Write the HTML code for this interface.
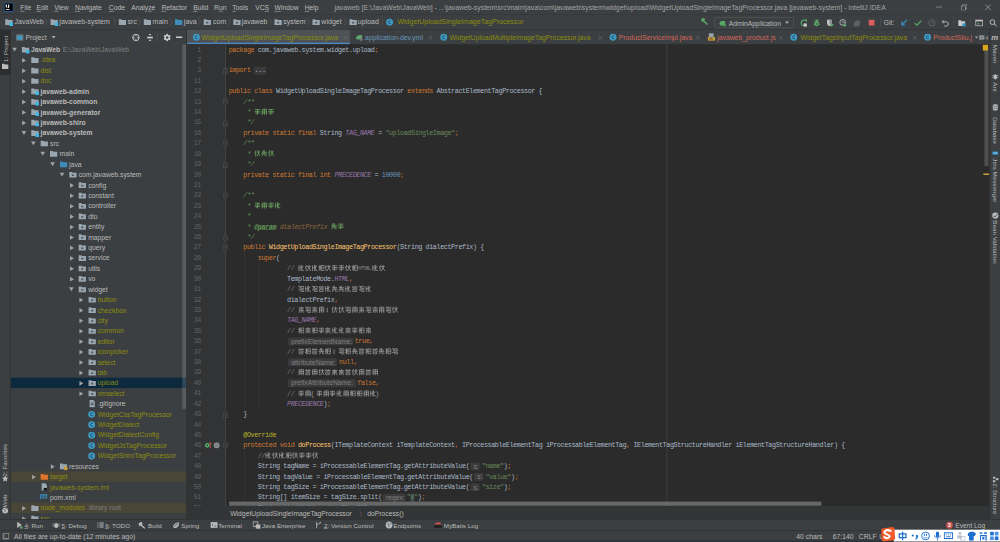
<!DOCTYPE html><html><head><meta charset="utf-8"><style>
*{margin:0;padding:0;box-sizing:border-box}
html,body{width:1000px;height:542px;overflow:hidden;background:#3c3f41}
#root{position:absolute;left:0;top:0;width:1920px;height:1040px;transform:scale(0.5208333);transform-origin:0 0;background:#3c3f41;font-family:"Liberation Sans",sans-serif;font-size:13px;color:#bbbbbb;overflow:hidden}
.abs{position:absolute}
.t{position:absolute;white-space:pre;line-height:20px}
.mono{font-family:"Liberation Mono",monospace}
#title{left:0;top:0;width:1920px;height:27px;background:#3c3f41}
#tline{left:0;top:27px;width:1920px;height:1px;background:#2b2b2b}
#nav{left:0;top:28px;width:1920px;height:28px;background:#3c3f41}
#nline{left:0;top:56px;width:1920px;height:1px;background:#2b2b2b}
#lstrip{left:0;top:57px;width:20px;height:940px;background:#3c3f41;border-right:1px solid #2b2b2b}
#proj{left:21px;top:57px;width:337px;height:940px;background:#3c3f41}
#projhdr{left:0;top:0;width:337px;height:28px;background:#3c3f41}
#tree{left:0;top:28px;width:337px;height:912px;overflow:hidden}
.row{position:absolute;left:0;width:337px;height:20px}
#psplit{left:358px;top:57px;width:1px;height:940px;background:#2b2b2b}
#tabs{left:359px;top:57px;width:1541px;height:28px;background:#3c3f41}
#editor{left:359px;top:85px;width:1541px;height:887px;background:#2b2b2b;overflow:hidden}
#gutter{left:0;top:0;width:75px;height:887px;background:#313335}
#crumb{left:359px;top:972px;width:1541px;height:25px;background:#323435}
#rstrip{left:1900px;top:57px;width:20px;height:940px;background:#3c3f41;border-left:1px solid #2b2b2b}
#toolbar{left:0;top:997px;width:1920px;height:21px;background:#3c3f41;border-top:1px solid #2b2b2b}
#status{left:0;top:1018px;width:1920px;height:22px;background:#3c3f41;border-top:1px solid #2b2b2b}
.cl{position:absolute;left:80px;height:20px;line-height:20px;margin-top:0.5px;white-space:pre;font-family:"Liberation Mono",monospace;font-size:13px;letter-spacing:-0.8px;color:#a9b7c6}
.ln{position:absolute;left:0;width:26px;text-align:right;height:20px;line-height:20px;margin-top:0.5px;font-family:"Liberation Mono",monospace;font-size:13px;letter-spacing:-1.3px;color:#606366}
.kw{color:#cc7832}.str{color:#6a8759}.num{color:#6897bb}.doc{color:#629755;font-style:italic}.cm{color:#808080}
.cst{color:#9876aa;font-style:italic}.fn{color:#ffc66d}.ann{color:#bbb529}
.hint{display:inline-block;height:15px;line-height:15px;background:#3b3b3b;color:#808080;font-family:"Liberation Sans",sans-serif;font-size:13px;letter-spacing:0;padding:0 0 0 6px;border-radius:3px;vertical-align:top;margin-top:2px;margin-right:3px;overflow:hidden;white-space:pre}
.cj{display:inline-block;width:12.86px;height:12.5px;vertical-align:-2px;padding:0 0.5px 0 0.4px;opacity:.95}
</style></head><body><div id="root"><div id="title" class="abs"><svg class="abs" style="left:7px;top:5px" width="19" height="18" viewBox="0 0 19 18"><rect x="0.75" y="0.75" width="17.5" height="16.5" fill="#000" stroke="#2f6fc0" stroke-width="1.5"/><path d="M4 3.5h2.2v6H4zM8.5 3.5h2.2v5c0 1.5-1 2-2.5 2H7.5V9h.7c.3 0 .3-.2.3-.5z" fill="#fff"/><rect x="4" y="12.5" width="7" height="1.6" fill="#fff"/></svg><div class="t" style="left:39px;top:6px;color:#bbbbbb;font-size:13px;"><span style="text-decoration:underline;text-underline-offset:1px">F</span>ile</div><div class="t" style="left:70px;top:6px;color:#bbbbbb;font-size:13px;"><span style="text-decoration:underline;text-underline-offset:1px">E</span>dit</div><div class="t" style="left:104px;top:6px;color:#bbbbbb;font-size:13px;"><span style="text-decoration:underline;text-underline-offset:1px">V</span>iew</div><div class="t" style="left:144px;top:6px;color:#bbbbbb;font-size:13px;"><span style="text-decoration:underline;text-underline-offset:1px">N</span>avigate</div><div class="t" style="left:209px;top:6px;color:#bbbbbb;font-size:13px;"><span style="text-decoration:underline;text-underline-offset:1px">C</span>ode</div><div class="t" style="left:252px;top:6px;color:#bbbbbb;font-size:13px;">Analy<span style="text-decoration:underline;text-underline-offset:1px">z</span>e</div><div class="t" style="left:310px;top:6px;color:#bbbbbb;font-size:13px;"><span style="text-decoration:underline;text-underline-offset:1px">R</span>efactor</div><div class="t" style="left:371px;top:6px;color:#bbbbbb;font-size:13px;"><span style="text-decoration:underline;text-underline-offset:1px">B</span>uild</div><div class="t" style="left:411px;top:6px;color:#bbbbbb;font-size:13px;">R<span style="text-decoration:underline;text-underline-offset:1px">u</span>n</div><div class="t" style="left:446px;top:6px;color:#bbbbbb;font-size:13px;"><span style="text-decoration:underline;text-underline-offset:1px">T</span>ools</div><div class="t" style="left:490px;top:6px;color:#bbbbbb;font-size:13px;">VC<span style="text-decoration:underline;text-underline-offset:1px">S</span></div><div class="t" style="left:527px;top:6px;color:#bbbbbb;font-size:13px;"><span style="text-decoration:underline;text-underline-offset:1px">W</span>indow</div><div class="t" style="left:585px;top:6px;color:#bbbbbb;font-size:13px;"><span style="text-decoration:underline;text-underline-offset:1px">H</span>elp</div><div class="t" style="left:642px;top:5.5px;color:#a5a5a5;font-size:13.2px;">javaweb [E:\JavaWeb\JavaWeb] - ...\javaweb-system\src\main\java\com\javaweb\system\widget\upload\WidgetUploadSingleImageTagProcessor.java [javaweb-system] - IntelliJ IDEA</div><div class="abs" style="left:1797px;top:13px;width:12px;height:1px;background:#bbb"></div><svg class="abs" style="left:1845px;top:8px" width="12" height="12" viewBox="0 0 12 12"><rect x="0.5" y="3.5" width="8" height="8" fill="none" stroke="#bbb"/><path d="M3.5 3.5V0.5H11.5V8.5H8.5" fill="none" stroke="#bbb"/></svg><svg class="abs" style="left:1891px;top:8px" width="12" height="12" viewBox="0 0 12 12"><path d="M0.5 0.5L11.5 11.5M11.5 0.5L0.5 11.5" stroke="#bbb" stroke-width="1.2"/></svg></div><div id="tline" class="abs"></div><div id="nav" class="abs"><svg class="abs" style="left:9px;top:6px" width="16" height="16" viewBox="0 0 16 16"><path d="M1 3h5l1.5 1.5H15V14H1z" fill="#9aa7b0"/><rect x="9" y="9" width="7" height="7" fill="#40b6e0"/></svg><div class="t" style="left:28px;top:5px;color:#bbbbbb;font-size:13.5px;">JavaWeb</div><svg class="abs" style="left:85px;top:5px" width="8" height="18" viewBox="0 0 8 18"><path d="M1 1L6 9L1 17" fill="none" stroke="#5a5d5f"/></svg><svg class="abs" style="left:96px;top:6px" width="16" height="16" viewBox="0 0 16 16"><path d="M1 3h5l1.5 1.5H15V14H1z" fill="#9aa7b0"/><rect x="9" y="9" width="7" height="7" fill="#40b6e0"/></svg><div class="t" style="left:114px;top:5px;color:#bbbbbb;font-size:13.5px;">javaweb-system</div><svg class="abs" style="left:216px;top:5px" width="8" height="18" viewBox="0 0 8 18"><path d="M1 1L6 9L1 17" fill="none" stroke="#5a5d5f"/></svg><svg class="abs" style="left:227px;top:6px" width="16" height="16" viewBox="0 0 16 16"><path d="M1 3h5l1.5 1.5H15V14H1z" fill="#9aa7b0"/></svg><div class="t" style="left:245px;top:5px;color:#bbbbbb;font-size:13.5px;">src</div><svg class="abs" style="left:264px;top:5px" width="8" height="18" viewBox="0 0 8 18"><path d="M1 1L6 9L1 17" fill="none" stroke="#5a5d5f"/></svg><svg class="abs" style="left:275px;top:6px" width="16" height="16" viewBox="0 0 16 16"><path d="M1 3h5l1.5 1.5H15V14H1z" fill="#9aa7b0"/></svg><div class="t" style="left:293px;top:5px;color:#bbbbbb;font-size:13.5px;">main</div><svg class="abs" style="left:324px;top:5px" width="8" height="18" viewBox="0 0 8 18"><path d="M1 1L6 9L1 17" fill="none" stroke="#5a5d5f"/></svg><svg class="abs" style="left:335px;top:6px" width="16" height="16" viewBox="0 0 16 16"><path d="M1 3h5l1.5 1.5H15V14H1z" fill="#3d8dbb"/></svg><div class="t" style="left:353px;top:5px;color:#bbbbbb;font-size:13.5px;">java</div><svg class="abs" style="left:379px;top:5px" width="8" height="18" viewBox="0 0 8 18"><path d="M1 1L6 9L1 17" fill="none" stroke="#5a5d5f"/></svg><svg class="abs" style="left:390px;top:6px" width="16" height="16" viewBox="0 0 16 16"><path d="M1 3h5l1.5 1.5H15V14H1z" fill="#9aa7b0"/><rect x="6" y="8" width="4" height="3" fill="#3c3f41" opacity=".8"/></svg><div class="t" style="left:409px;top:5px;color:#bbbbbb;font-size:13.5px;">com</div><svg class="abs" style="left:436px;top:5px" width="8" height="18" viewBox="0 0 8 18"><path d="M1 1L6 9L1 17" fill="none" stroke="#5a5d5f"/></svg><svg class="abs" style="left:447px;top:6px" width="16" height="16" viewBox="0 0 16 16"><path d="M1 3h5l1.5 1.5H15V14H1z" fill="#9aa7b0"/><rect x="6" y="8" width="4" height="3" fill="#3c3f41" opacity=".8"/></svg><div class="t" style="left:464px;top:5px;color:#bbbbbb;font-size:13.5px;">javaweb</div><svg class="abs" style="left:515px;top:5px" width="8" height="18" viewBox="0 0 8 18"><path d="M1 1L6 9L1 17" fill="none" stroke="#5a5d5f"/></svg><svg class="abs" style="left:526px;top:6px" width="16" height="16" viewBox="0 0 16 16"><path d="M1 3h5l1.5 1.5H15V14H1z" fill="#9aa7b0"/><rect x="6" y="8" width="4" height="3" fill="#3c3f41" opacity=".8"/></svg><div class="t" style="left:544px;top:5px;color:#bbbbbb;font-size:13.5px;">system</div><svg class="abs" style="left:588px;top:5px" width="8" height="18" viewBox="0 0 8 18"><path d="M1 1L6 9L1 17" fill="none" stroke="#5a5d5f"/></svg><svg class="abs" style="left:599px;top:6px" width="16" height="16" viewBox="0 0 16 16"><path d="M1 3h5l1.5 1.5H15V14H1z" fill="#9aa7b0"/><rect x="6" y="8" width="4" height="3" fill="#3c3f41" opacity=".8"/></svg><div class="t" style="left:617px;top:5px;color:#bbbbbb;font-size:13.5px;">widget</div><svg class="abs" style="left:659px;top:5px" width="8" height="18" viewBox="0 0 8 18"><path d="M1 1L6 9L1 17" fill="none" stroke="#5a5d5f"/></svg><svg class="abs" style="left:670px;top:6px" width="16" height="16" viewBox="0 0 16 16"><path d="M1 3h5l1.5 1.5H15V14H1z" fill="#9aa7b0"/><rect x="6" y="8" width="4" height="3" fill="#3c3f41" opacity=".8"/></svg><div class="t" style="left:687px;top:5px;color:#bbbbbb;font-size:13.5px;">upload</div><svg class="abs" style="left:730px;top:5px" width="8" height="18" viewBox="0 0 8 18"><path d="M1 1L6 9L1 17" fill="none" stroke="#5a5d5f"/></svg><svg class="abs" style="left:740px;top:6px" width="16" height="16" viewBox="0 0 16 16"><circle cx="8" cy="8.5" r="6.6" fill="#3e9bc5"/><path d="M10.4 6.3A2.9 2.9 0 1 0 10.4 10.7" stroke="#1f4456" stroke-width="1.6" fill="none"/></svg><div class="t" style="left:763px;top:5px;color:#8c8c10;font-size:13.5px;">WidgetUploadSingleImageTagProcessor</div><svg class="abs" style="left:1344px;top:5px" width="16" height="16" viewBox="0 0 16 16"><path d="M2 4L7 1L10 4L8 6L15 13L13 15L6 8L4 10z" fill="#59a869"/></svg><div class="abs" style="left:1372px;top:5px;width:152px;height:21px;border:1px solid #5e6060;border-radius:2px;background:#3c3f41"></div><svg class="abs" style="left:1379px;top:8px" width="16" height="16" viewBox="0 0 16 16"><path d="M2 9C4 3 11 3 14 6L12 13L4 13z" fill="#59a869"/><circle cx="12" cy="12" r="3" fill="#499c54"/></svg><div class="t" style="left:1399px;top:6.5px;color:#bbbbbb;font-size:13px;">AdminApplication</div><svg class="abs" style="left:1507px;top:13px" width="8" height="6" viewBox="0 0 8 6"><path d="M0 0H8L4 5z" fill="#aaa"/></svg><svg class="abs" style="left:1535px;top:8px" width="16" height="16" viewBox="0 0 16 16"><path d="M8.5 13.5A5.5 5.5 0 1 1 12.5 4" stroke="#59a869" stroke-width="2.2" fill="none"/><path d="M9.5 1.5L14.5 1.5L14.5 6.5z" fill="#59a869"/><rect x="8" y="9" width="6" height="6" fill="#cfcfcf"/></svg><svg class="abs" style="left:1560px;top:8px" width="16" height="16" viewBox="0 0 16 16"><ellipse cx="8" cy="9.5" rx="4" ry="5" fill="#59a869"/><circle cx="8" cy="4" r="2.5" fill="#59a869"/><path d="M2 7h3M11 7h3M2 11h3M11 11h3M4 2l2 2M12 2l-2 2" stroke="#59a869" stroke-width="1.4"/><circle cx="8" cy="10" r="1.6" fill="#3c3f41"/></svg><svg class="abs" style="left:1586px;top:8px" width="16" height="16" viewBox="0 0 16 16"><path d="M2 2h9v6c0 3-2 5-4.5 6C4 13 2 11 2 8z" fill="#c9c9c9"/><path d="M6.5 2h4.5v6c0 1-.3 2-1 3H6.5z" fill="#8c8c8c"/><path d="M9 8.5l6.5 3.5-6.5 3.5z" fill="#59a869"/></svg><svg class="abs" style="left:1611px;top:8px" width="16" height="16" viewBox="0 0 16 16"><circle cx="7" cy="7" r="5.5" fill="none" stroke="#c9c9c9" stroke-width="1.6"/><path d="M7 4v3h3" stroke="#c9c9c9" stroke-width="1.4" fill="none"/><path d="M9 9l6 4-6 3z" fill="#59a869"/></svg><svg class="abs" style="left:1637px;top:8px" width="16" height="16" viewBox="0 0 16 16"><path d="M2 12C2 6 6 3 10 3s5 4 4 8-5 4-8 4-4-1-4-3z" fill="#5d5f60"/></svg><svg class="abs" style="left:1666px;top:8px" width="16" height="16" viewBox="0 0 16 16"><rect x="2" y="2" width="11" height="11" fill="#db5c5c"/></svg><svg class="abs" style="left:1728px;top:8px" width="16" height="16" viewBox="0 0 16 16"><path d="M13.5 2L4 11.5M3.5 5.5v6.5h6.5" stroke="#3592c4" stroke-width="2.2" fill="none"/></svg><svg class="abs" style="left:1755px;top:8px" width="16" height="16" viewBox="0 0 16 16"><path d="M1.5 8.5l4 4L14 3.5" stroke="#59a869" stroke-width="2.3" fill="none"/></svg><svg class="abs" style="left:1781px;top:8px" width="16" height="16" viewBox="0 0 16 16"><circle cx="8" cy="8" r="6" fill="none" stroke="#6e6e6e" stroke-width="1.4"/><path d="M8 4.5V8h3" stroke="#6e6e6e" stroke-width="1.3" fill="none"/></svg><svg class="abs" style="left:1807px;top:8px" width="16" height="16" viewBox="0 0 16 16"><path d="M5 3L2 6l3 3" stroke="#c9c9c9" stroke-width="1.6" fill="none"/><path d="M2.5 6H10a4 4 0 0 1 0 8H6" stroke="#c9c9c9" stroke-width="1.6" fill="none"/></svg><svg class="abs" style="left:1839px;top:8px" width="16" height="16" viewBox="0 0 16 16"><path d="M1 3h5l1 2h7v9H1z" fill="#c9c9c9"/><rect x="9" y="9" width="6" height="6" fill="#3592c4"/></svg><svg class="abs" style="left:1872px;top:8px" width="16" height="16" viewBox="0 0 16 16"><rect x="1.5" y="2.5" width="13" height="11" fill="none" stroke="#c9c9c9" stroke-width="1.3"/><rect x="1.5" y="2.5" width="13" height="2.5" fill="#c9c9c9"/><path d="M5 7l4 2.5L5 12z" fill="#59a869"/></svg><svg class="abs" style="left:1899px;top:8px" width="16" height="16" viewBox="0 0 16 16"><circle cx="6.5" cy="6.5" r="4.5" fill="none" stroke="#c9c9c9" stroke-width="1.7"/><path d="M10 10l4.5 4.5" stroke="#c9c9c9" stroke-width="1.9"/></svg><div class="abs" style="left:1690px;top:5px;width:1px;height:18px;background:#515151"></div><div class="abs" style="left:1830px;top:5px;width:1px;height:18px;background:#515151"></div><div class="abs" style="left:1863px;top:5px;width:1px;height:18px;background:#515151"></div><div class="t" style="left:1697px;top:6px;color:#bbbbbb;font-size:13px;">Git:</div></div><div id="nline" class="abs"></div><div id="lstrip" class="abs"><div class="abs" style="left:0;top:1px;width:20px;height:86px;background:#2b2d2e"></div><div class="abs" style="left:4.5px;top:62px;transform:rotate(-90deg);transform-origin:0 0;white-space:pre;font-size:12px;line-height:14px;color:#bbbbbb">1: Project</div><svg class="abs" style="left:3px;top:63px" width="14" height="14" viewBox="0 0 16 16"><path d="M1 3h5l1.5 1.5H15V14H1z" fill="#bbbbbb"/></svg><div class="abs" style="left:3px;top:858px;transform:rotate(-90deg);transform-origin:0 0;white-space:pre;font-size:12px;line-height:14px;color:#bbbbbb">2: Favorites</div><svg class="abs" style="left:3px;top:855px" width="14" height="14" viewBox="0 0 16 16"><path d="M8 1l2.1 4.6 5 .5-3.8 3.4 1.1 4.9L8 11.9 3.6 14.4l1.1-4.9L.9 6.1l5-.5z" fill="#bbbbbb"/></svg><div class="abs" style="left:3px;top:917px;transform:rotate(-90deg);transform-origin:0 0;white-space:pre;font-size:12px;line-height:14px;color:#bbbbbb">Web</div><svg class="abs" style="left:3px;top:916px" width="14" height="14" viewBox="0 0 16 16"><circle cx="8" cy="8" r="6.5" fill="#bbbbbb"/><path d="M4 5c2 1 3 0 4 2s-2 3 0 5M10 3c0 2 2 2 3 3" stroke="#3c3f41" stroke-width="1.3" fill="none"/></svg></div><div id="proj" class="abs"><div id="projhdr" class="abs"><svg class="abs" style="left:9px;top:7px" width="16" height="16" viewBox="0 0 16 16"><rect x="1" y="2" width="14" height="12" fill="#6e7376"/><rect x="3" y="4.5" width="10" height="7.5" fill="#3d9ac2"/></svg><div class="t" style="left:28px;top:5.5px;color:#bbbbbb;font-size:13px;">Project</div><svg class="abs" style="left:78px;top:12px" width="8" height="6" viewBox="0 0 8 6"><path d="M0 0H8L4 5z" fill="#aaa"/></svg><svg class="abs" style="left:232px;top:7px" width="16" height="16" viewBox="0 0 16 16"><circle cx="8" cy="8" r="6.2" fill="none" stroke="#c9c9c9" stroke-width="1.8"/><path d="M8 2v3.5M8 10.5V14M2 8h3.5M10.5 8H14" stroke="#c9c9c9" stroke-width="1.8"/></svg><svg class="abs" style="left:259px;top:7px" width="16" height="16" viewBox="0 0 16 16"><rect x="2.5" y="6.5" width="11" height="3.2" fill="#c9c9c9"/><path d="M5.5 1.5h5L8 4.5zM5.5 14.5h5L8 11.5z" fill="#c9c9c9"/></svg><div class="abs" style="left:281px;top:6px;width:1px;height:18px;background:#5a5a5a"></div><svg class="abs" style="left:292px;top:7px" width="16" height="16" viewBox="0 0 16 16"><circle cx="8" cy="8" r="4" fill="none" stroke="#c9c9c9" stroke-width="3"/><path d="M8.00 4.00L8.00 1.00M11.46 6.00L14.06 4.50M11.46 10.00L14.06 11.50M8.00 12.00L8.00 15.00M4.54 10.00L1.94 11.50M4.54 6.00L1.94 4.50" stroke="#c9c9c9" stroke-width="2.8"/></svg><div class="abs" style="left:317px;top:13px;width:12px;height:3px;background:#c9c9c9"></div></div><div id="tree" class="abs"><div class="row" style="top:0px;"><svg class="abs" style="left:0.5px;top:5px" width="12" height="10" viewBox="0 0 12 10"><path d="M1.5 1.5L10.5 1.5L6 9z" fill="#a0a3a6"/></svg><svg class="abs" style="left:19.5px;top:2px" width="16" height="16" viewBox="0 0 16 16"><path d="M1 3h5l1.5 1.5H15V14H1z" fill="#9aa7b0"/><rect x="9" y="9" width="7" height="7" fill="#40b6e0"/></svg><div class="t" style="left:38.5px;top:1px;color:#bbbbbb;font-weight:bold;">JavaWeb<span style="color:#7f7f7f;font-weight:normal;margin-left:1px"> E:\JavaWeb\JavaWeb</span></div></div><div class="row" style="top:20px;"><svg class="abs" style="left:20.299999999999997px;top:5px" width="10" height="12" viewBox="0 0 10 12"><path d="M1.5 1.5L9 6L1.5 10.5z" fill="#a0a3a6"/></svg><svg class="abs" style="left:37.8px;top:2px" width="16" height="16" viewBox="0 0 16 16"><path d="M1 3h5l1.5 1.5H15V14H1z" fill="#9aa7b0"/></svg><div class="t" style="left:56.8px;top:1px;color:#8c8c10;">.idea</div></div><div class="row" style="top:40px;"><svg class="abs" style="left:20.299999999999997px;top:5px" width="10" height="12" viewBox="0 0 10 12"><path d="M1.5 1.5L9 6L1.5 10.5z" fill="#a0a3a6"/></svg><svg class="abs" style="left:37.8px;top:2px" width="16" height="16" viewBox="0 0 16 16"><path d="M1 3h5l1.5 1.5H15V14H1z" fill="#9aa7b0"/></svg><div class="t" style="left:56.8px;top:1px;color:#8c8c10;">dist</div></div><div class="row" style="top:60px;"><svg class="abs" style="left:20.299999999999997px;top:5px" width="10" height="12" viewBox="0 0 10 12"><path d="M1.5 1.5L9 6L1.5 10.5z" fill="#a0a3a6"/></svg><svg class="abs" style="left:37.8px;top:2px" width="16" height="16" viewBox="0 0 16 16"><path d="M1 3h5l1.5 1.5H15V14H1z" fill="#9aa7b0"/></svg><div class="t" style="left:56.8px;top:1px;color:#8c8c10;">doc</div></div><div class="row" style="top:80px;"><svg class="abs" style="left:20.299999999999997px;top:5px" width="10" height="12" viewBox="0 0 10 12"><path d="M1.5 1.5L9 6L1.5 10.5z" fill="#a0a3a6"/></svg><svg class="abs" style="left:37.8px;top:2px" width="16" height="16" viewBox="0 0 16 16"><path d="M1 3h5l1.5 1.5H15V14H1z" fill="#9aa7b0"/><rect x="9" y="9" width="7" height="7" fill="#40b6e0"/></svg><div class="t" style="left:56.8px;top:1px;color:#bbbbbb;font-weight:bold;">javaweb-admin</div></div><div class="row" style="top:100px;"><svg class="abs" style="left:20.299999999999997px;top:5px" width="10" height="12" viewBox="0 0 10 12"><path d="M1.5 1.5L9 6L1.5 10.5z" fill="#a0a3a6"/></svg><svg class="abs" style="left:37.8px;top:2px" width="16" height="16" viewBox="0 0 16 16"><path d="M1 3h5l1.5 1.5H15V14H1z" fill="#9aa7b0"/><rect x="9" y="9" width="7" height="7" fill="#40b6e0"/></svg><div class="t" style="left:56.8px;top:1px;color:#bbbbbb;font-weight:bold;">javaweb-common</div></div><div class="row" style="top:120px;"><svg class="abs" style="left:20.299999999999997px;top:5px" width="10" height="12" viewBox="0 0 10 12"><path d="M1.5 1.5L9 6L1.5 10.5z" fill="#a0a3a6"/></svg><svg class="abs" style="left:37.8px;top:2px" width="16" height="16" viewBox="0 0 16 16"><path d="M1 3h5l1.5 1.5H15V14H1z" fill="#9aa7b0"/><rect x="9" y="9" width="7" height="7" fill="#40b6e0"/></svg><div class="t" style="left:56.8px;top:1px;color:#bbbbbb;font-weight:bold;">javaweb-generator</div></div><div class="row" style="top:140px;"><svg class="abs" style="left:20.299999999999997px;top:5px" width="10" height="12" viewBox="0 0 10 12"><path d="M1.5 1.5L9 6L1.5 10.5z" fill="#a0a3a6"/></svg><svg class="abs" style="left:37.8px;top:2px" width="16" height="16" viewBox="0 0 16 16"><path d="M1 3h5l1.5 1.5H15V14H1z" fill="#9aa7b0"/><rect x="9" y="9" width="7" height="7" fill="#40b6e0"/></svg><div class="t" style="left:56.8px;top:1px;color:#bbbbbb;font-weight:bold;">javaweb-shiro</div></div><div class="row" style="top:160px;"><svg class="abs" style="left:18.799999999999997px;top:5px" width="12" height="10" viewBox="0 0 12 10"><path d="M1.5 1.5L10.5 1.5L6 9z" fill="#a0a3a6"/></svg><svg class="abs" style="left:37.8px;top:2px" width="16" height="16" viewBox="0 0 16 16"><path d="M1 3h5l1.5 1.5H15V14H1z" fill="#9aa7b0"/><rect x="9" y="9" width="7" height="7" fill="#40b6e0"/></svg><div class="t" style="left:56.8px;top:1px;color:#bbbbbb;font-weight:bold;">javaweb-system</div></div><div class="row" style="top:180px;"><svg class="abs" style="left:37.099999999999994px;top:5px" width="12" height="10" viewBox="0 0 12 10"><path d="M1.5 1.5L10.5 1.5L6 9z" fill="#a0a3a6"/></svg><svg class="abs" style="left:56.099999999999994px;top:2px" width="16" height="16" viewBox="0 0 16 16"><path d="M1 3h5l1.5 1.5H15V14H1z" fill="#9aa7b0"/></svg><div class="t" style="left:75.1px;top:1px;color:#bbbbbb;">src</div></div><div class="row" style="top:200px;"><svg class="abs" style="left:55.400000000000006px;top:5px" width="12" height="10" viewBox="0 0 12 10"><path d="M1.5 1.5L10.5 1.5L6 9z" fill="#a0a3a6"/></svg><svg class="abs" style="left:74.4px;top:2px" width="16" height="16" viewBox="0 0 16 16"><path d="M1 3h5l1.5 1.5H15V14H1z" fill="#9aa7b0"/></svg><div class="t" style="left:93.4px;top:1px;color:#bbbbbb;">main</div></div><div class="row" style="top:220px;"><svg class="abs" style="left:73.7px;top:5px" width="12" height="10" viewBox="0 0 12 10"><path d="M1.5 1.5L10.5 1.5L6 9z" fill="#a0a3a6"/></svg><svg class="abs" style="left:92.7px;top:2px" width="16" height="16" viewBox="0 0 16 16"><path d="M1 3h5l1.5 1.5H15V14H1z" fill="#3d8dbb"/></svg><div class="t" style="left:111.7px;top:1px;color:#bbbbbb;">java</div></div><div class="row" style="top:240px;"><svg class="abs" style="left:92.0px;top:5px" width="12" height="10" viewBox="0 0 12 10"><path d="M1.5 1.5L10.5 1.5L6 9z" fill="#a0a3a6"/></svg><svg class="abs" style="left:111.0px;top:2px" width="16" height="16" viewBox="0 0 16 16"><path d="M1 3h5l1.5 1.5H15V14H1z" fill="#9aa7b0"/><rect x="6" y="8" width="4" height="3" fill="#3c3f41" opacity=".8"/></svg><div class="t" style="left:130.0px;top:1px;color:#bbbbbb;">com.javaweb.system</div></div><div class="row" style="top:260px;"><svg class="abs" style="left:111.80000000000001px;top:5px" width="10" height="12" viewBox="0 0 10 12"><path d="M1.5 1.5L9 6L1.5 10.5z" fill="#a0a3a6"/></svg><svg class="abs" style="left:129.3px;top:2px" width="16" height="16" viewBox="0 0 16 16"><path d="M1 3h5l1.5 1.5H15V14H1z" fill="#9aa7b0"/><rect x="6" y="8" width="4" height="3" fill="#3c3f41" opacity=".8"/></svg><div class="t" style="left:148.3px;top:1px;color:#bbbbbb;">config</div></div><div class="row" style="top:280px;"><svg class="abs" style="left:111.80000000000001px;top:5px" width="10" height="12" viewBox="0 0 10 12"><path d="M1.5 1.5L9 6L1.5 10.5z" fill="#a0a3a6"/></svg><svg class="abs" style="left:129.3px;top:2px" width="16" height="16" viewBox="0 0 16 16"><path d="M1 3h5l1.5 1.5H15V14H1z" fill="#9aa7b0"/><rect x="6" y="8" width="4" height="3" fill="#3c3f41" opacity=".8"/></svg><div class="t" style="left:148.3px;top:1px;color:#bbbbbb;">constant</div></div><div class="row" style="top:300px;"><svg class="abs" style="left:111.80000000000001px;top:5px" width="10" height="12" viewBox="0 0 10 12"><path d="M1.5 1.5L9 6L1.5 10.5z" fill="#a0a3a6"/></svg><svg class="abs" style="left:129.3px;top:2px" width="16" height="16" viewBox="0 0 16 16"><path d="M1 3h5l1.5 1.5H15V14H1z" fill="#9aa7b0"/><rect x="6" y="8" width="4" height="3" fill="#3c3f41" opacity=".8"/></svg><div class="t" style="left:148.3px;top:1px;color:#bbbbbb;">controller</div></div><div class="row" style="top:320px;"><svg class="abs" style="left:111.80000000000001px;top:5px" width="10" height="12" viewBox="0 0 10 12"><path d="M1.5 1.5L9 6L1.5 10.5z" fill="#a0a3a6"/></svg><svg class="abs" style="left:129.3px;top:2px" width="16" height="16" viewBox="0 0 16 16"><path d="M1 3h5l1.5 1.5H15V14H1z" fill="#9aa7b0"/><rect x="6" y="8" width="4" height="3" fill="#3c3f41" opacity=".8"/></svg><div class="t" style="left:148.3px;top:1px;color:#bbbbbb;">dto</div></div><div class="row" style="top:340px;"><svg class="abs" style="left:111.80000000000001px;top:5px" width="10" height="12" viewBox="0 0 10 12"><path d="M1.5 1.5L9 6L1.5 10.5z" fill="#a0a3a6"/></svg><svg class="abs" style="left:129.3px;top:2px" width="16" height="16" viewBox="0 0 16 16"><path d="M1 3h5l1.5 1.5H15V14H1z" fill="#9aa7b0"/><rect x="6" y="8" width="4" height="3" fill="#3c3f41" opacity=".8"/></svg><div class="t" style="left:148.3px;top:1px;color:#bbbbbb;">entity</div></div><div class="row" style="top:360px;"><svg class="abs" style="left:111.80000000000001px;top:5px" width="10" height="12" viewBox="0 0 10 12"><path d="M1.5 1.5L9 6L1.5 10.5z" fill="#a0a3a6"/></svg><svg class="abs" style="left:129.3px;top:2px" width="16" height="16" viewBox="0 0 16 16"><path d="M1 3h5l1.5 1.5H15V14H1z" fill="#9aa7b0"/><rect x="6" y="8" width="4" height="3" fill="#3c3f41" opacity=".8"/></svg><div class="t" style="left:148.3px;top:1px;color:#bbbbbb;">mapper</div></div><div class="row" style="top:380px;"><svg class="abs" style="left:111.80000000000001px;top:5px" width="10" height="12" viewBox="0 0 10 12"><path d="M1.5 1.5L9 6L1.5 10.5z" fill="#a0a3a6"/></svg><svg class="abs" style="left:129.3px;top:2px" width="16" height="16" viewBox="0 0 16 16"><path d="M1 3h5l1.5 1.5H15V14H1z" fill="#9aa7b0"/><rect x="6" y="8" width="4" height="3" fill="#3c3f41" opacity=".8"/></svg><div class="t" style="left:148.3px;top:1px;color:#bbbbbb;">query</div></div><div class="row" style="top:400px;"><svg class="abs" style="left:111.80000000000001px;top:5px" width="10" height="12" viewBox="0 0 10 12"><path d="M1.5 1.5L9 6L1.5 10.5z" fill="#a0a3a6"/></svg><svg class="abs" style="left:129.3px;top:2px" width="16" height="16" viewBox="0 0 16 16"><path d="M1 3h5l1.5 1.5H15V14H1z" fill="#9aa7b0"/><rect x="6" y="8" width="4" height="3" fill="#3c3f41" opacity=".8"/></svg><div class="t" style="left:148.3px;top:1px;color:#bbbbbb;">service</div></div><div class="row" style="top:420px;"><svg class="abs" style="left:111.80000000000001px;top:5px" width="10" height="12" viewBox="0 0 10 12"><path d="M1.5 1.5L9 6L1.5 10.5z" fill="#a0a3a6"/></svg><svg class="abs" style="left:129.3px;top:2px" width="16" height="16" viewBox="0 0 16 16"><path d="M1 3h5l1.5 1.5H15V14H1z" fill="#9aa7b0"/><rect x="6" y="8" width="4" height="3" fill="#3c3f41" opacity=".8"/></svg><div class="t" style="left:148.3px;top:1px;color:#bbbbbb;">utils</div></div><div class="row" style="top:440px;"><svg class="abs" style="left:111.80000000000001px;top:5px" width="10" height="12" viewBox="0 0 10 12"><path d="M1.5 1.5L9 6L1.5 10.5z" fill="#a0a3a6"/></svg><svg class="abs" style="left:129.3px;top:2px" width="16" height="16" viewBox="0 0 16 16"><path d="M1 3h5l1.5 1.5H15V14H1z" fill="#9aa7b0"/><rect x="6" y="8" width="4" height="3" fill="#3c3f41" opacity=".8"/></svg><div class="t" style="left:148.3px;top:1px;color:#bbbbbb;">vo</div></div><div class="row" style="top:460px;"><svg class="abs" style="left:110.30000000000001px;top:5px" width="12" height="10" viewBox="0 0 12 10"><path d="M1.5 1.5L10.5 1.5L6 9z" fill="#a0a3a6"/></svg><svg class="abs" style="left:129.3px;top:2px" width="16" height="16" viewBox="0 0 16 16"><path d="M1 3h5l1.5 1.5H15V14H1z" fill="#9aa7b0"/><rect x="6" y="8" width="4" height="3" fill="#3c3f41" opacity=".8"/></svg><div class="t" style="left:148.3px;top:1px;color:#bbbbbb;">widget</div></div><div class="row" style="top:480px;"><svg class="abs" style="left:130.1px;top:5px" width="10" height="12" viewBox="0 0 10 12"><path d="M1.5 1.5L9 6L1.5 10.5z" fill="#a0a3a6"/></svg><svg class="abs" style="left:147.6px;top:2px" width="16" height="16" viewBox="0 0 16 16"><path d="M1 3h5l1.5 1.5H15V14H1z" fill="#9aa7b0"/><rect x="6" y="8" width="4" height="3" fill="#3c3f41" opacity=".8"/></svg><div class="t" style="left:166.6px;top:1px;color:#8c8c10;">button</div></div><div class="row" style="top:500px;"><svg class="abs" style="left:130.1px;top:5px" width="10" height="12" viewBox="0 0 10 12"><path d="M1.5 1.5L9 6L1.5 10.5z" fill="#a0a3a6"/></svg><svg class="abs" style="left:147.6px;top:2px" width="16" height="16" viewBox="0 0 16 16"><path d="M1 3h5l1.5 1.5H15V14H1z" fill="#9aa7b0"/><rect x="6" y="8" width="4" height="3" fill="#3c3f41" opacity=".8"/></svg><div class="t" style="left:166.6px;top:1px;color:#8c8c10;">checkbox</div></div><div class="row" style="top:520px;"><svg class="abs" style="left:130.1px;top:5px" width="10" height="12" viewBox="0 0 10 12"><path d="M1.5 1.5L9 6L1.5 10.5z" fill="#a0a3a6"/></svg><svg class="abs" style="left:147.6px;top:2px" width="16" height="16" viewBox="0 0 16 16"><path d="M1 3h5l1.5 1.5H15V14H1z" fill="#9aa7b0"/><rect x="6" y="8" width="4" height="3" fill="#3c3f41" opacity=".8"/></svg><div class="t" style="left:166.6px;top:1px;color:#8c8c10;">city</div></div><div class="row" style="top:540px;"><svg class="abs" style="left:130.1px;top:5px" width="10" height="12" viewBox="0 0 10 12"><path d="M1.5 1.5L9 6L1.5 10.5z" fill="#a0a3a6"/></svg><svg class="abs" style="left:147.6px;top:2px" width="16" height="16" viewBox="0 0 16 16"><path d="M1 3h5l1.5 1.5H15V14H1z" fill="#9aa7b0"/><rect x="6" y="8" width="4" height="3" fill="#3c3f41" opacity=".8"/></svg><div class="t" style="left:166.6px;top:1px;color:#8c8c10;">common</div></div><div class="row" style="top:560px;"><svg class="abs" style="left:130.1px;top:5px" width="10" height="12" viewBox="0 0 10 12"><path d="M1.5 1.5L9 6L1.5 10.5z" fill="#a0a3a6"/></svg><svg class="abs" style="left:147.6px;top:2px" width="16" height="16" viewBox="0 0 16 16"><path d="M1 3h5l1.5 1.5H15V14H1z" fill="#9aa7b0"/><rect x="6" y="8" width="4" height="3" fill="#3c3f41" opacity=".8"/></svg><div class="t" style="left:166.6px;top:1px;color:#8c8c10;">editor</div></div><div class="row" style="top:580px;"><svg class="abs" style="left:130.1px;top:5px" width="10" height="12" viewBox="0 0 10 12"><path d="M1.5 1.5L9 6L1.5 10.5z" fill="#a0a3a6"/></svg><svg class="abs" style="left:147.6px;top:2px" width="16" height="16" viewBox="0 0 16 16"><path d="M1 3h5l1.5 1.5H15V14H1z" fill="#9aa7b0"/><rect x="6" y="8" width="4" height="3" fill="#3c3f41" opacity=".8"/></svg><div class="t" style="left:166.6px;top:1px;color:#8c8c10;">iconpicker</div></div><div class="row" style="top:600px;"><svg class="abs" style="left:130.1px;top:5px" width="10" height="12" viewBox="0 0 10 12"><path d="M1.5 1.5L9 6L1.5 10.5z" fill="#a0a3a6"/></svg><svg class="abs" style="left:147.6px;top:2px" width="16" height="16" viewBox="0 0 16 16"><path d="M1 3h5l1.5 1.5H15V14H1z" fill="#9aa7b0"/><rect x="6" y="8" width="4" height="3" fill="#3c3f41" opacity=".8"/></svg><div class="t" style="left:166.6px;top:1px;color:#8c8c10;">select</div></div><div class="row" style="top:620px;"><svg class="abs" style="left:130.1px;top:5px" width="10" height="12" viewBox="0 0 10 12"><path d="M1.5 1.5L9 6L1.5 10.5z" fill="#a0a3a6"/></svg><svg class="abs" style="left:147.6px;top:2px" width="16" height="16" viewBox="0 0 16 16"><path d="M1 3h5l1.5 1.5H15V14H1z" fill="#9aa7b0"/><rect x="6" y="8" width="4" height="3" fill="#3c3f41" opacity=".8"/></svg><div class="t" style="left:166.6px;top:1px;color:#8c8c10;">tab</div></div><div class="row" style="top:640px;background:#0d293e"><svg class="abs" style="left:130.1px;top:5px" width="10" height="12" viewBox="0 0 10 12"><path d="M1.5 1.5L9 6L1.5 10.5z" fill="#a0a3a6"/></svg><svg class="abs" style="left:147.6px;top:2px" width="16" height="16" viewBox="0 0 16 16"><path d="M1 3h5l1.5 1.5H15V14H1z" fill="#9aa7b0"/><rect x="6" y="8" width="4" height="3" fill="#3c3f41" opacity=".8"/></svg><div class="t" style="left:166.6px;top:1px;color:#8c8c10;">upload</div></div><div class="row" style="top:660px;"><svg class="abs" style="left:130.1px;top:5px" width="10" height="12" viewBox="0 0 10 12"><path d="M1.5 1.5L9 6L1.5 10.5z" fill="#a0a3a6"/></svg><svg class="abs" style="left:147.6px;top:2px" width="16" height="16" viewBox="0 0 16 16"><path d="M1 3h5l1.5 1.5H15V14H1z" fill="#9aa7b0"/><rect x="6" y="8" width="4" height="3" fill="#3c3f41" opacity=".8"/></svg><div class="t" style="left:166.6px;top:1px;color:#8c8c10;">xmselect</div></div><div class="row" style="top:680px;"><svg class="abs" style="left:147.6px;top:2px" width="16" height="16" viewBox="0 0 16 16"><path d="M3 1h7l3 3v11H3z" fill="#9aa7b0"/><rect x="5" y="6" width="6" height="1.5" fill="#3c3f41"/><rect x="5" y="9" width="6" height="1.5" fill="#3c3f41"/></svg><div class="t" style="left:166.6px;top:1px;color:#bbbbbb;">.gitignore</div></div><div class="row" style="top:700px;"><svg class="abs" style="left:146.6px;top:2px" width="16" height="16" viewBox="0 0 16 16"><circle cx="8" cy="8.5" r="6.6" fill="#3e9bc5"/><path d="M10.4 6.3A2.9 2.9 0 1 0 10.4 10.7" stroke="#1f4456" stroke-width="1.6" fill="none"/></svg><div class="t" style="left:166.6px;top:1px;color:#8c8c10;">WidgetCssTagProcessor</div></div><div class="row" style="top:720px;"><svg class="abs" style="left:146.6px;top:2px" width="16" height="16" viewBox="0 0 16 16"><circle cx="8" cy="8.5" r="6.6" fill="#3e9bc5"/><path d="M10.4 6.3A2.9 2.9 0 1 0 10.4 10.7" stroke="#1f4456" stroke-width="1.6" fill="none"/></svg><div class="t" style="left:166.6px;top:1px;color:#8c8c10;">WidgetDialect</div></div><div class="row" style="top:740px;"><svg class="abs" style="left:146.6px;top:2px" width="16" height="16" viewBox="0 0 16 16"><circle cx="8" cy="8.5" r="6.6" fill="#3e9bc5"/><path d="M10.4 6.3A2.9 2.9 0 1 0 10.4 10.7" stroke="#1f4456" stroke-width="1.6" fill="none"/></svg><div class="t" style="left:166.6px;top:1px;color:#8c8c10;">WidgetDialectConfig</div></div><div class="row" style="top:760px;"><svg class="abs" style="left:146.6px;top:2px" width="16" height="16" viewBox="0 0 16 16"><circle cx="8" cy="8.5" r="6.6" fill="#3e9bc5"/><path d="M10.4 6.3A2.9 2.9 0 1 0 10.4 10.7" stroke="#1f4456" stroke-width="1.6" fill="none"/></svg><div class="t" style="left:166.6px;top:1px;color:#8c8c10;">WidgetJsTagProcessor</div></div><div class="row" style="top:780px;"><svg class="abs" style="left:146.6px;top:2px" width="16" height="16" viewBox="0 0 16 16"><circle cx="8" cy="8.5" r="6.6" fill="#3e9bc5"/><path d="M10.4 6.3A2.9 2.9 0 1 0 10.4 10.7" stroke="#1f4456" stroke-width="1.6" fill="none"/></svg><div class="t" style="left:166.6px;top:1px;color:#8c8c10;">WidgetShiroTagProcessor</div></div><div class="row" style="top:800px;"><svg class="abs" style="left:75.2px;top:5px" width="10" height="12" viewBox="0 0 10 12"><path d="M1.5 1.5L9 6L1.5 10.5z" fill="#a0a3a6"/></svg><svg class="abs" style="left:92.7px;top:2px" width="16" height="16" viewBox="0 0 16 16"><path d="M1 3h5l1.5 1.5H15V14H1z" fill="#9aa7b0"/><rect x="9" y="9" width="7" height="7" fill="#c99d3a"/></svg><div class="t" style="left:111.7px;top:1px;color:#bbbbbb;">resources</div></div><div class="row" style="top:820px;background:#4a4637"><svg class="abs" style="left:38.599999999999994px;top:5px" width="10" height="12" viewBox="0 0 10 12"><path d="M1.5 1.5L9 6L1.5 10.5z" fill="#a0a3a6"/></svg><svg class="abs" style="left:56.099999999999994px;top:2px" width="16" height="16" viewBox="0 0 16 16"><path d="M1 3h5l1.5 1.5H15V14H1z" fill="#e0752d"/></svg><div class="t" style="left:75.1px;top:1px;color:#8c8c10;">target</div></div><div class="row" style="top:840px;"><svg class="abs" style="left:56.099999999999994px;top:2px" width="16" height="16" viewBox="0 0 16 16"><path d="M3 1h7l3 3v11H3z" fill="#9aa7b0"/><rect x="7" y="10" width="6" height="5" fill="#111"/></svg><div class="t" style="left:75.1px;top:1px;color:#8c8c10;">javaweb-system.iml</div></div><div class="row" style="top:860px;"><div class="t" style="left:55.099999999999994px;top:-1px;color:#3592c4;font-size:17px;font-style:italic;font-weight:bold">m</div><div class="t" style="left:75.1px;top:1px;color:#bbbbbb;">pom.xml</div></div><div class="row" style="top:880px;background:#4a4637"><svg class="abs" style="left:20.299999999999997px;top:5px" width="10" height="12" viewBox="0 0 10 12"><path d="M1.5 1.5L9 6L1.5 10.5z" fill="#a0a3a6"/></svg><svg class="abs" style="left:37.8px;top:2px" width="16" height="16" viewBox="0 0 16 16"><path d="M1 3h5l1.5 1.5H15V14H1z" fill="#9aa7b0"/></svg><div class="t" style="left:56.8px;top:1px;color:#8c8c10;">node_modules<span style="color:#7f7f7f;font-weight:normal;margin-left:4px"> library root</span></div></div><div class="row" style="top:900px;"><svg class="abs" style="left:20.299999999999997px;top:5px" width="10" height="12" viewBox="0 0 10 12"><path d="M1.5 1.5L9 6L1.5 10.5z" fill="#a0a3a6"/></svg><svg class="abs" style="left:37.8px;top:2px" width="16" height="16" viewBox="0 0 16 16"><path d="M1 3h5l1.5 1.5H15V14H1z" fill="#9aa7b0"/></svg><div class="t" style="left:56.8px;top:1px;color:#8c8c10;">src</div></div><div class="abs" style="left:329px;top:0;width:8px;height:700px;background:rgba(255,255,255,0.15)"></div></div></div><div id="psplit" class="abs"></div><div id="tabs" class="abs"><div class="abs" style="left:0;top:0;width:313px;height:28px;background:#4e5254"></div><div class="abs" style="left:0;top:25px;width:313px;height:3px;background:#4a88c7"></div><svg class="abs" style="left:10px;top:6px" width="16" height="16" viewBox="0 0 16 16"><circle cx="8" cy="8.5" r="6.6" fill="#3e9bc5"/><path d="M10.4 6.3A2.9 2.9 0 1 0 10.4 10.7" stroke="#1f4456" stroke-width="1.6" fill="none"/></svg><div class="t" style="left:28px;top:5.5px;color:#8c8c10;font-size:13.1px;">WidgetUploadSingleImageTagProcessor.java</div><svg class="abs" style="left:300px;top:11px" width="9" height="9" viewBox="0 0 9 9"><path d="M1 1L8 8M8 1L1 8" stroke="#6e6e6e" stroke-width="1.2"/></svg><svg class="abs" style="left:323px;top:6px" width="16" height="16" viewBox="0 0 16 16"><path d="M1 10C3 4 10 3 14 5L12 12L3 13z" fill="#59a869"/><circle cx="11" cy="12" r="3.2" fill="#8c8c8c"/><circle cx="11" cy="12" r="1.2" fill="#3c3f41"/></svg><div class="t" style="left:342px;top:5.5px;color:#6897bb;font-size:13.1px;">application-dev.yml</div><svg class="abs" style="left:463px;top:11px" width="9" height="9" viewBox="0 0 9 9"><path d="M1 1L8 8M8 1L1 8" stroke="#6e6e6e" stroke-width="1.2"/></svg><svg class="abs" style="left:485px;top:6px" width="16" height="16" viewBox="0 0 16 16"><circle cx="8" cy="8.5" r="6.6" fill="#3e9bc5"/><path d="M10.4 6.3A2.9 2.9 0 1 0 10.4 10.7" stroke="#1f4456" stroke-width="1.6" fill="none"/></svg><div class="t" style="left:504px;top:5.5px;color:#8c8c10;font-size:13.1px;">WidgetUploadMultipleImageTagProcessor.java</div><svg class="abs" style="left:789px;top:11px" width="9" height="9" viewBox="0 0 9 9"><path d="M1 1L8 8M8 1L1 8" stroke="#6e6e6e" stroke-width="1.2"/></svg><svg class="abs" style="left:810px;top:6px" width="16" height="16" viewBox="0 0 16 16"><circle cx="8" cy="8.5" r="6.6" fill="#3e9bc5"/><path d="M10.4 6.3A2.9 2.9 0 1 0 10.4 10.7" stroke="#1f4456" stroke-width="1.6" fill="none"/></svg><div class="t" style="left:829px;top:5.5px;color:#d1675a;font-size:13.1px;">ProductServiceImpl.java</div><svg class="abs" style="left:976px;top:11px" width="9" height="9" viewBox="0 0 9 9"><path d="M1 1L8 8M8 1L1 8" stroke="#6e6e6e" stroke-width="1.2"/></svg><svg class="abs" style="left:999px;top:6px" width="16" height="16" viewBox="0 0 16 16"><rect x="3" y="1" width="9" height="8" fill="#9aa7b0"/><rect x="1" y="8" width="14" height="7" fill="#c99d3a"/><text x="3" y="14" font-size="6" font-family="Liberation Sans" fill="#222">JS</text></svg><div class="t" style="left:1018px;top:5.5px;color:#d1675a;font-size:13.1px;">javaweb_product.js</div><svg class="abs" style="left:1136px;top:11px" width="9" height="9" viewBox="0 0 9 9"><path d="M1 1L8 8M8 1L1 8" stroke="#6e6e6e" stroke-width="1.2"/></svg><svg class="abs" style="left:1157px;top:6px" width="16" height="16" viewBox="0 0 16 16"><circle cx="8" cy="8.5" r="6.6" fill="#3e9bc5"/><path d="M10.4 6.3A2.9 2.9 0 1 0 10.4 10.7" stroke="#1f4456" stroke-width="1.6" fill="none"/></svg><div class="t" style="left:1178px;top:5.5px;color:#8c8c10;font-size:13.1px;">WidgetTagsInputTagProcessor.java</div><svg class="abs" style="left:1393px;top:11px" width="9" height="9" viewBox="0 0 9 9"><path d="M1 1L8 8M8 1L1 8" stroke="#6e6e6e" stroke-width="1.2"/></svg><svg class="abs" style="left:1414px;top:6px" width="16" height="16" viewBox="0 0 16 16"><circle cx="8" cy="8.5" r="6.6" fill="#3e9bc5"/><path d="M10.4 6.3A2.9 2.9 0 1 0 10.4 10.7" stroke="#1f4456" stroke-width="1.6" fill="none"/></svg><div class="t" style="left:1433px;top:5.5px;color:#d1675a;font-size:13.1px;">ProductSku.j</div><svg class="abs" style="left:1513px;top:9px" width="28" height="12" viewBox="0 0 28 12"><path d="M0 4h6l-3 4z" fill="#aaa"/><rect x="8" y="2" width="10" height="8" fill="#9a9a9a"/><rect x="8" y="5" width="10" height="1" fill="#555"/><text x="20" y="10" font-size="9" font-family="Liberation Sans" fill="#aaa">4</text></svg></div><div id="editor" class="abs"><div id="gutter" class="abs"></div><div class="abs" style="left:74px;top:0;width:1px;height:887px;background:#555555"></div><div class="abs" style="left:921px;top:0;width:1px;height:887px;background:#505050"></div><div class="abs" style="left:110px;top:400px;width:1px;height:300px;background:#3c3c3c"></div><div class="abs" style="left:139px;top:420px;width:1px;height:280px;background:#3c3c3c"></div><div class="abs" style="left:110px;top:780px;width:1px;height:120px;background:#3c3c3c"></div><div class="ln" style="top:0px">1</div><div class="cl" style="top:0px"><span class="kw">package</span><span> com.javaweb.system.widget.upload</span><span class="kw">;</span></div><div class="ln" style="top:20px">2</div><div class="cl" style="top:20px"></div><div class="ln" style="top:40px">3</div><div class="cl" style="top:40px"><span class="kw">import</span><span> </span><span style="background:#3b3b3b;color:#a9b7c6;padding:0 1px">...</span></div><div class="ln" style="top:60px">11</div><div class="cl" style="top:60px"></div><div class="ln" style="top:80px">12</div><div class="cl" style="top:80px"><span class="kw">public class</span><span> WidgetUploadSingleImageTagProcessor </span><span class="kw">extends</span><span> AbstractElementTagProcessor {</span></div><div class="ln" style="top:100px">13</div><div class="cl" style="top:100px"><span>    </span><span class="doc">/**</span></div><div class="ln" style="top:120px">14</div><div class="cl" style="top:120px"><span>     </span><span class="doc">* </span><svg class="cj" viewBox="0 0 12 12" style="color:#6fa862"><path d="M2 2H10M1 5.5H11M6 2V11.5L4.5 10.5M2 8.5H10" stroke="currentColor" stroke-width="1.5" fill="none" stroke-linecap="square"/></svg><svg class="cj" viewBox="0 0 12 12" style="color:#6fa862"><path d="M2 11.5V1.5H10.5V11.5M2 5H10.5M2 8.5H10.5M6.2 1.5V11.5" stroke="currentColor" stroke-width="1.5" fill="none" stroke-linecap="square"/></svg><svg class="cj" viewBox="0 0 12 12" style="color:#6fa862"><path d="M2 2H10M1 5.5H11M6 2V11.5L4.5 10.5M2 8.5H10" stroke="currentColor" stroke-width="1.5" fill="none" stroke-linecap="square"/></svg></div><div class="ln" style="top:140px">15</div><div class="cl" style="top:140px"><span>     </span><span class="doc">*/</span></div><div class="ln" style="top:160px">16</div><div class="cl" style="top:160px"><span>    </span><span class="kw">private static final</span><span> String </span><span class="cst">TAG_NAME</span><span> = </span><span class="str">&quot;uploadSingleImage&quot;</span><span class="kw">;</span></div><div class="ln" style="top:180px">17</div><div class="cl" style="top:180px"><span>    </span><span class="doc">/**</span></div><div class="ln" style="top:200px">18</div><div class="cl" style="top:200px"><span>     </span><span class="doc">* </span><svg class="cj" viewBox="0 0 12 12" style="color:#6fa862"><path d="M3 1L1 5.5M2.5 4V11.5M5 3.5H11M8 1V6M8 6L5 11.5M8 6L11 11.5" stroke="currentColor" stroke-width="1.5" fill="none" stroke-linecap="square"/></svg><svg class="cj" viewBox="0 0 12 12" style="color:#6fa862"><path d="M4 1L3 4M2.5 4H10M6 1V6M1 7H11M4.5 7L2 11.5M7.5 7V11H11" stroke="currentColor" stroke-width="1.5" fill="none" stroke-linecap="square"/></svg><svg class="cj" viewBox="0 0 12 12" style="color:#6fa862"><path d="M3 1L1 5.5M2.5 4V11.5M5 3.5H11M8 1V6M8 6L5 11.5M8 6L11 11.5" stroke="currentColor" stroke-width="1.5" fill="none" stroke-linecap="square"/></svg></div><div class="ln" style="top:220px">19</div><div class="cl" style="top:220px"><span>     </span><span class="doc">*/</span></div><div class="ln" style="top:240px">20</div><div class="cl" style="top:240px"><span>    </span><span class="kw">private static final int</span><span> </span><span class="cst">PRECEDENCE</span><span> = </span><span class="num">10000</span><span class="kw">;</span></div><div class="ln" style="top:260px">21</div><div class="cl" style="top:260px"></div><div class="ln" style="top:280px">22</div><div class="cl" style="top:280px"><span>    </span><span class="doc">/**</span></div><div class="ln" style="top:300px">23</div><div class="cl" style="top:300px"><span>     </span><span class="doc">* </span><svg class="cj" viewBox="0 0 12 12" style="color:#6fa862"><path d="M2 2H10M1 5.5H11M6 2V11.5L4.5 10.5M2 8.5H10" stroke="currentColor" stroke-width="1.5" fill="none" stroke-linecap="square"/></svg><svg class="cj" viewBox="0 0 12 12" style="color:#6fa862"><path d="M2 11.5V1.5H10.5V11.5M2 5H10.5M2 8.5H10.5M6.2 1.5V11.5" stroke="currentColor" stroke-width="1.5" fill="none" stroke-linecap="square"/></svg><svg class="cj" viewBox="0 0 12 12" style="color:#6fa862"><path d="M2 2H10M1 5.5H11M6 2V11.5L4.5 10.5M2 8.5H10" stroke="currentColor" stroke-width="1.5" fill="none" stroke-linecap="square"/></svg><svg class="cj" viewBox="0 0 12 12" style="color:#6fa862"><path d="M1.5 2V11M1.5 6H4.5M5.5 1V11M9.5 3L7 6M7 1.5V10.5L11 11" stroke="currentColor" stroke-width="1.5" fill="none" stroke-linecap="square"/></svg></div><div class="ln" style="top:320px">24</div><div class="cl" style="top:320px"><span>     </span><span class="doc">*</span></div><div class="ln" style="top:340px">25</div><div class="cl" style="top:340px"><span>     </span><span class="doc">* </span><span style="color:#629755;font-style:italic;font-weight:bold;text-decoration:underline">@param</span><span> </span><span style="color:#8a653b;font-style:italic">dialectPrefix</span><span> </span><svg class="cj" viewBox="0 0 12 12" style="color:#6fa862"><path d="M4 1L3 4M2.5 4H10M6 1V6M1 7H11M4.5 7L2 11.5M7.5 7V11H11" stroke="currentColor" stroke-width="1.5" fill="none" stroke-linecap="square"/></svg><svg class="cj" viewBox="0 0 12 12" style="color:#6fa862"><path d="M2 2H10M1 5.5H11M6 2V11.5L4.5 10.5M2 8.5H10" stroke="currentColor" stroke-width="1.5" fill="none" stroke-linecap="square"/></svg></div><div class="ln" style="top:360px">26</div><div class="cl" style="top:360px"><span>     </span><span class="doc">*/</span></div><div class="ln" style="top:380px">27</div><div class="cl" style="top:380px"><span>    </span><span class="kw">public</span><span> </span><span class="fn">WidgetUploadSingleImageTagProcessor</span><span>(String dialectPrefix) {</span></div><div class="ln" style="top:400px">28</div><div class="cl" style="top:400px"><span>        </span><span class="kw">super</span><span>(</span></div><div class="ln" style="top:420px">29</div><div class="cl" style="top:420px"><span>                </span><span class="cm">// </span><svg class="cj" viewBox="0 0 12 12" style="color:#9a9a9a"><path d="M1.5 2V11M1.5 6H4.5M5.5 1V11M9.5 3L7 6M7 1.5V10.5L11 11" stroke="currentColor" stroke-width="1.5" fill="none" stroke-linecap="square"/></svg><svg class="cj" viewBox="0 0 12 12" style="color:#9a9a9a"><path d="M3 1L1 5.5M2.5 4V11.5M5 3.5H11M8 1V6M8 6L5 11.5M8 6L11 11.5" stroke="currentColor" stroke-width="1.5" fill="none" stroke-linecap="square"/></svg><svg class="cj" viewBox="0 0 12 12" style="color:#9a9a9a"><path d="M1.5 2V11M1.5 6H4.5M5.5 1V11M9.5 3L7 6M7 1.5V10.5L11 11" stroke="currentColor" stroke-width="1.5" fill="none" stroke-linecap="square"/></svg><svg class="cj" viewBox="0 0 12 12" style="color:#9a9a9a"><path d="M1 3.5H5M3 1V11.5M3 5L1 9M3 5.5L5 8M6.5 1.5H11V11H6.5ZM6.5 6H11" stroke="currentColor" stroke-width="1.5" fill="none" stroke-linecap="square"/></svg><svg class="cj" viewBox="0 0 12 12" style="color:#9a9a9a"><path d="M3 1L1 5.5M2.5 4V11.5M5 3.5H11M8 1V6M8 6L5 11.5M8 6L11 11.5" stroke="currentColor" stroke-width="1.5" fill="none" stroke-linecap="square"/></svg><svg class="cj" viewBox="0 0 12 12" style="color:#9a9a9a"><path d="M2 2H10M1 5.5H11M6 2V11.5L4.5 10.5M2 8.5H10" stroke="currentColor" stroke-width="1.5" fill="none" stroke-linecap="square"/></svg><svg class="cj" viewBox="0 0 12 12" style="color:#9a9a9a"><path d="M2 2H10M1 5.5H11M6 2V11.5L4.5 10.5M2 8.5H10" stroke="currentColor" stroke-width="1.5" fill="none" stroke-linecap="square"/></svg><svg class="cj" viewBox="0 0 12 12" style="color:#9a9a9a"><path d="M3 1L1 5.5M2.5 4V11.5M5 3.5H11M8 1V6M8 6L5 11.5M8 6L11 11.5" stroke="currentColor" stroke-width="1.5" fill="none" stroke-linecap="square"/></svg><svg class="cj" viewBox="0 0 12 12" style="color:#9a9a9a"><path d="M1 3.5H5M3 1V11.5M3 5L1 9M3 5.5L5 8M6.5 1.5H11V11H6.5ZM6.5 6H11" stroke="currentColor" stroke-width="1.5" fill="none" stroke-linecap="square"/></svg><span style="display:inline-block;width:26px;font-family:'Liberation Sans',sans-serif;font-size:9px;letter-spacing:0;color:#9a9a9a">HTML</span><svg class="cj" viewBox="0 0 12 12" style="color:#9a9a9a"><path d="M1.5 2V11M1.5 6H4.5M5.5 1V11M9.5 3L7 6M7 1.5V10.5L11 11" stroke="currentColor" stroke-width="1.5" fill="none" stroke-linecap="square"/></svg><svg class="cj" viewBox="0 0 12 12" style="color:#9a9a9a"><path d="M3 1L1 5.5M2.5 4V11.5M5 3.5H11M8 1V6M8 6L5 11.5M8 6L11 11.5" stroke="currentColor" stroke-width="1.5" fill="none" stroke-linecap="square"/></svg></div><div class="ln" style="top:440px">30</div><div class="cl" style="top:440px"><span>                TemplateMode.</span><span class="cst">HTML</span><span class="kw">,</span></div><div class="ln" style="top:460px">31</div><div class="cl" style="top:460px"><span>                </span><span class="cm">// </span><svg class="cj" viewBox="0 0 12 12" style="color:#9a9a9a"><path d="M1 1.5H5L3 5L5 8.5H1.5M6.5 1.5H11V5.5H6.5ZM6.5 8H11V11.5H6.5Z" stroke="currentColor" stroke-width="1.5" fill="none" stroke-linecap="square"/></svg><svg class="cj" viewBox="0 0 12 12" style="color:#9a9a9a"><path d="M1.5 2V11M1.5 6H4.5M5.5 1V11M9.5 3L7 6M7 1.5V10.5L11 11" stroke="currentColor" stroke-width="1.5" fill="none" stroke-linecap="square"/></svg><svg class="cj" viewBox="0 0 12 12" style="color:#9a9a9a"><path d="M1 1.5H5L3 5L5 8.5H1.5M6.5 1.5H11V5.5H6.5ZM6.5 8H11V11.5H6.5Z" stroke="currentColor" stroke-width="1.5" fill="none" stroke-linecap="square"/></svg><svg class="cj" viewBox="0 0 12 12" style="color:#9a9a9a"><path d="M3 1L1.5 3.5M8 1L6.5 3.5M2 3H5M7 3H11M2 6.5L6 5L10 6.5M3 8H9V11.5H3Z" stroke="currentColor" stroke-width="1.5" fill="none" stroke-linecap="square"/></svg><svg class="cj" viewBox="0 0 12 12" style="color:#9a9a9a"><path d="M1.5 2V11M1.5 6H4.5M5.5 1V11M9.5 3L7 6M7 1.5V10.5L11 11" stroke="currentColor" stroke-width="1.5" fill="none" stroke-linecap="square"/></svg><svg class="cj" viewBox="0 0 12 12" style="color:#9a9a9a"><path d="M4 1L3 4M2.5 4H10M6 1V6M1 7H11M4.5 7L2 11.5M7.5 7V11H11" stroke="currentColor" stroke-width="1.5" fill="none" stroke-linecap="square"/></svg><svg class="cj" viewBox="0 0 12 12" style="color:#9a9a9a"><path d="M4 1L3 4M2.5 4H10M6 1V6M1 7H11M4.5 7L2 11.5M7.5 7V11H11" stroke="currentColor" stroke-width="1.5" fill="none" stroke-linecap="square"/></svg><svg class="cj" viewBox="0 0 12 12" style="color:#9a9a9a"><path d="M1.5 2V11M1.5 6H4.5M5.5 1V11M9.5 3L7 6M7 1.5V10.5L11 11" stroke="currentColor" stroke-width="1.5" fill="none" stroke-linecap="square"/></svg><svg class="cj" viewBox="0 0 12 12" style="color:#9a9a9a"><path d="M3 1L1.5 3.5M8 1L6.5 3.5M2 3H5M7 3H11M2 6.5L6 5L10 6.5M3 8H9V11.5H3Z" stroke="currentColor" stroke-width="1.5" fill="none" stroke-linecap="square"/></svg><svg class="cj" viewBox="0 0 12 12" style="color:#9a9a9a"><path d="M1 1.5H5L3 5L5 8.5H1.5M6.5 1.5H11V5.5H6.5ZM6.5 8H11V11.5H6.5Z" stroke="currentColor" stroke-width="1.5" fill="none" stroke-linecap="square"/></svg><svg class="cj" viewBox="0 0 12 12" style="color:#9a9a9a"><path d="M1.5 2V11M1.5 6H4.5M5.5 1V11M9.5 3L7 6M7 1.5V10.5L11 11" stroke="currentColor" stroke-width="1.5" fill="none" stroke-linecap="square"/></svg></div><div class="ln" style="top:480px">32</div><div class="cl" style="top:480px"><span>                dialectPrefix</span><span class="kw">,</span></div><div class="ln" style="top:500px">33</div><div class="cl" style="top:500px"><span>                </span><span class="cm">// </span><svg class="cj" viewBox="0 0 12 12" style="color:#9a9a9a"><path d="M6 1V3M1.5 3H10.5M3 5H9M2 7.5H10M4 7.5L2 11.5M8 7.5L10.5 11.5M6 7.5V11.5" stroke="currentColor" stroke-width="1.5" fill="none" stroke-linecap="square"/></svg><svg class="cj" viewBox="0 0 12 12" style="color:#9a9a9a"><path d="M1 1.5H5L3 5L5 8.5H1.5M6.5 1.5H11V5.5H6.5ZM6.5 8H11V11.5H6.5Z" stroke="currentColor" stroke-width="1.5" fill="none" stroke-linecap="square"/></svg><svg class="cj" viewBox="0 0 12 12" style="color:#9a9a9a"><path d="M6 1V3M1.5 3H10.5M3 5H9M2 7.5H10M4 7.5L2 11.5M8 7.5L10.5 11.5M6 7.5V11.5" stroke="currentColor" stroke-width="1.5" fill="none" stroke-linecap="square"/></svg><svg class="cj" viewBox="0 0 12 12" style="color:#9a9a9a"><path d="M2 11.5V1.5H10.5V11.5M2 5H10.5M2 8.5H10.5M6.2 1.5V11.5" stroke="currentColor" stroke-width="1.5" fill="none" stroke-linecap="square"/></svg><svg class="cj" viewBox="0 0 12 12" style="color:#9a9a9a"><path d="M5 4.5V5.5M5 9V10" stroke="currentColor" stroke-width="2.2" fill="none" stroke-linecap="square"/></svg><svg class="cj" viewBox="0 0 12 12" style="color:#9a9a9a"><path d="M3 1L1 5.5M2.5 4V11.5M5 3.5H11M8 1V6M8 6L5 11.5M8 6L11 11.5" stroke="currentColor" stroke-width="1.5" fill="none" stroke-linecap="square"/></svg><svg class="cj" viewBox="0 0 12 12" style="color:#9a9a9a"><path d="M3 1L1 5.5M2.5 4V11.5M5 3.5H11M8 1V6M8 6L5 11.5M8 6L11 11.5" stroke="currentColor" stroke-width="1.5" fill="none" stroke-linecap="square"/></svg><svg class="cj" viewBox="0 0 12 12" style="color:#9a9a9a"><path d="M1 1.5H5L3 5L5 8.5H1.5M6.5 1.5H11V5.5H6.5ZM6.5 8H11V11.5H6.5Z" stroke="currentColor" stroke-width="1.5" fill="none" stroke-linecap="square"/></svg><svg class="cj" viewBox="0 0 12 12" style="color:#9a9a9a"><path d="M2 11.5V1.5H10.5V11.5M2 5H10.5M2 8.5H10.5M6.2 1.5V11.5" stroke="currentColor" stroke-width="1.5" fill="none" stroke-linecap="square"/></svg><svg class="cj" viewBox="0 0 12 12" style="color:#9a9a9a"><path d="M6 1V3M1.5 3H10.5M3 5H9M2 7.5H10M4 7.5L2 11.5M8 7.5L10.5 11.5M6 7.5V11.5" stroke="currentColor" stroke-width="1.5" fill="none" stroke-linecap="square"/></svg><svg class="cj" viewBox="0 0 12 12" style="color:#9a9a9a"><path d="M1 1.5H5L3 5L5 8.5H1.5M6.5 1.5H11V5.5H6.5ZM6.5 8H11V11.5H6.5Z" stroke="currentColor" stroke-width="1.5" fill="none" stroke-linecap="square"/></svg><svg class="cj" viewBox="0 0 12 12" style="color:#9a9a9a"><path d="M6 1V3M1.5 3H10.5M3 5H9M2 7.5H10M4 7.5L2 11.5M8 7.5L10.5 11.5M6 7.5V11.5" stroke="currentColor" stroke-width="1.5" fill="none" stroke-linecap="square"/></svg><svg class="cj" viewBox="0 0 12 12" style="color:#9a9a9a"><path d="M2 11.5V1.5H10.5V11.5M2 5H10.5M2 8.5H10.5M6.2 1.5V11.5" stroke="currentColor" stroke-width="1.5" fill="none" stroke-linecap="square"/></svg><svg class="cj" viewBox="0 0 12 12" style="color:#9a9a9a"><path d="M1 1.5H5L3 5L5 8.5H1.5M6.5 1.5H11V5.5H6.5ZM6.5 8H11V11.5H6.5Z" stroke="currentColor" stroke-width="1.5" fill="none" stroke-linecap="square"/></svg><svg class="cj" viewBox="0 0 12 12" style="color:#9a9a9a"><path d="M3 1L1 5.5M2.5 4V11.5M5 3.5H11M8 1V6M8 6L5 11.5M8 6L11 11.5" stroke="currentColor" stroke-width="1.5" fill="none" stroke-linecap="square"/></svg></div><div class="ln" style="top:520px">34</div><div class="cl" style="top:520px"><span>                </span><span class="cst">TAG_NAME</span><span class="kw">,</span></div><div class="ln" style="top:540px">35</div><div class="cl" style="top:540px"><span>                </span><span class="cm">// </span><svg class="cj" viewBox="0 0 12 12" style="color:#9a9a9a"><path d="M1 3.5H5M3 1V11.5M3 5L1 9M3 5.5L5 8M6.5 1.5H11V11H6.5ZM6.5 6H11" stroke="currentColor" stroke-width="1.5" fill="none" stroke-linecap="square"/></svg><svg class="cj" viewBox="0 0 12 12" style="color:#9a9a9a"><path d="M6 1V3M1.5 3H10.5M3 5H9M2 7.5H10M4 7.5L2 11.5M8 7.5L10.5 11.5M6 7.5V11.5" stroke="currentColor" stroke-width="1.5" fill="none" stroke-linecap="square"/></svg><svg class="cj" viewBox="0 0 12 12" style="color:#9a9a9a"><path d="M1 3.5H5M3 1V11.5M3 5L1 9M3 5.5L5 8M6.5 1.5H11V11H6.5ZM6.5 6H11" stroke="currentColor" stroke-width="1.5" fill="none" stroke-linecap="square"/></svg><svg class="cj" viewBox="0 0 12 12" style="color:#9a9a9a"><path d="M2 2H10M1 5.5H11M6 2V11.5L4.5 10.5M2 8.5H10" stroke="currentColor" stroke-width="1.5" fill="none" stroke-linecap="square"/></svg><svg class="cj" viewBox="0 0 12 12" style="color:#9a9a9a"><path d="M6 1V3M1.5 3H10.5M3 5H9M2 7.5H10M4 7.5L2 11.5M8 7.5L10.5 11.5M6 7.5V11.5" stroke="currentColor" stroke-width="1.5" fill="none" stroke-linecap="square"/></svg><svg class="cj" viewBox="0 0 12 12" style="color:#9a9a9a"><path d="M1.5 2V11M1.5 6H4.5M5.5 1V11M9.5 3L7 6M7 1.5V10.5L11 11" stroke="currentColor" stroke-width="1.5" fill="none" stroke-linecap="square"/></svg><svg class="cj" viewBox="0 0 12 12" style="color:#9a9a9a"><path d="M1.5 2V11M1.5 6H4.5M5.5 1V11M9.5 3L7 6M7 1.5V10.5L11 11" stroke="currentColor" stroke-width="1.5" fill="none" stroke-linecap="square"/></svg><svg class="cj" viewBox="0 0 12 12" style="color:#9a9a9a"><path d="M6 1V3M1.5 3H10.5M3 5H9M2 7.5H10M4 7.5L2 11.5M8 7.5L10.5 11.5M6 7.5V11.5" stroke="currentColor" stroke-width="1.5" fill="none" stroke-linecap="square"/></svg><svg class="cj" viewBox="0 0 12 12" style="color:#9a9a9a"><path d="M2 2H10M1 5.5H11M6 2V11.5L4.5 10.5M2 8.5H10" stroke="currentColor" stroke-width="1.5" fill="none" stroke-linecap="square"/></svg><svg class="cj" viewBox="0 0 12 12" style="color:#9a9a9a"><path d="M1 3.5H5M3 1V11.5M3 5L1 9M3 5.5L5 8M6.5 1.5H11V11H6.5ZM6.5 6H11" stroke="currentColor" stroke-width="1.5" fill="none" stroke-linecap="square"/></svg><svg class="cj" viewBox="0 0 12 12" style="color:#9a9a9a"><path d="M6 1V3M1.5 3H10.5M3 5H9M2 7.5H10M4 7.5L2 11.5M8 7.5L10.5 11.5M6 7.5V11.5" stroke="currentColor" stroke-width="1.5" fill="none" stroke-linecap="square"/></svg></div><div class="ln" style="top:560px">36</div><div class="cl" style="top:560px"><span>                </span><span class="hint" style="width:125px;margin-left:2px;margin-right:3px">prefixElementName:</span><span class="kw">true,</span></div><div class="ln" style="top:580px">37</div><div class="cl" style="top:580px"><span>                </span><span class="cm">// </span><svg class="cj" viewBox="0 0 12 12" style="color:#9a9a9a"><path d="M3 1L1.5 3.5M8 1L6.5 3.5M2 3H5M7 3H11M2 6.5L6 5L10 6.5M3 8H9V11.5H3Z" stroke="currentColor" stroke-width="1.5" fill="none" stroke-linecap="square"/></svg><svg class="cj" viewBox="0 0 12 12" style="color:#9a9a9a"><path d="M1 3.5H5M3 1V11.5M3 5L1 9M3 5.5L5 8M6.5 1.5H11V11H6.5ZM6.5 6H11" stroke="currentColor" stroke-width="1.5" fill="none" stroke-linecap="square"/></svg><svg class="cj" viewBox="0 0 12 12" style="color:#9a9a9a"><path d="M3 1L1.5 3.5M8 1L6.5 3.5M2 3H5M7 3H11M2 6.5L6 5L10 6.5M3 8H9V11.5H3Z" stroke="currentColor" stroke-width="1.5" fill="none" stroke-linecap="square"/></svg><svg class="cj" viewBox="0 0 12 12" style="color:#9a9a9a"><path d="M4 1L3 4M2.5 4H10M6 1V6M1 7H11M4.5 7L2 11.5M7.5 7V11H11" stroke="currentColor" stroke-width="1.5" fill="none" stroke-linecap="square"/></svg><svg class="cj" viewBox="0 0 12 12" style="color:#9a9a9a"><path d="M1 3.5H5M3 1V11.5M3 5L1 9M3 5.5L5 8M6.5 1.5H11V11H6.5ZM6.5 6H11" stroke="currentColor" stroke-width="1.5" fill="none" stroke-linecap="square"/></svg><svg class="cj" viewBox="0 0 12 12" style="color:#9a9a9a"><path d="M5 4.5V5.5M5 9V10" stroke="currentColor" stroke-width="2.2" fill="none" stroke-linecap="square"/></svg><svg class="cj" viewBox="0 0 12 12" style="color:#9a9a9a"><path d="M1 1.5H5L3 5L5 8.5H1.5M6.5 1.5H11V5.5H6.5ZM6.5 8H11V11.5H6.5Z" stroke="currentColor" stroke-width="1.5" fill="none" stroke-linecap="square"/></svg><svg class="cj" viewBox="0 0 12 12" style="color:#9a9a9a"><path d="M1 3.5H5M3 1V11.5M3 5L1 9M3 5.5L5 8M6.5 1.5H11V11H6.5ZM6.5 6H11" stroke="currentColor" stroke-width="1.5" fill="none" stroke-linecap="square"/></svg><svg class="cj" viewBox="0 0 12 12" style="color:#9a9a9a"><path d="M4 1L3 4M2.5 4H10M6 1V6M1 7H11M4.5 7L2 11.5M7.5 7V11H11" stroke="currentColor" stroke-width="1.5" fill="none" stroke-linecap="square"/></svg><svg class="cj" viewBox="0 0 12 12" style="color:#9a9a9a"><path d="M3 1L1.5 3.5M8 1L6.5 3.5M2 3H5M7 3H11M2 6.5L6 5L10 6.5M3 8H9V11.5H3Z" stroke="currentColor" stroke-width="1.5" fill="none" stroke-linecap="square"/></svg><svg class="cj" viewBox="0 0 12 12" style="color:#9a9a9a"><path d="M1 3.5H5M3 1V11.5M3 5L1 9M3 5.5L5 8M6.5 1.5H11V11H6.5ZM6.5 6H11" stroke="currentColor" stroke-width="1.5" fill="none" stroke-linecap="square"/></svg><svg class="cj" viewBox="0 0 12 12" style="color:#9a9a9a"><path d="M3 1L1.5 3.5M8 1L6.5 3.5M2 3H5M7 3H11M2 6.5L6 5L10 6.5M3 8H9V11.5H3Z" stroke="currentColor" stroke-width="1.5" fill="none" stroke-linecap="square"/></svg><svg class="cj" viewBox="0 0 12 12" style="color:#9a9a9a"><path d="M4 1L3 4M2.5 4H10M6 1V6M1 7H11M4.5 7L2 11.5M7.5 7V11H11" stroke="currentColor" stroke-width="1.5" fill="none" stroke-linecap="square"/></svg><svg class="cj" viewBox="0 0 12 12" style="color:#9a9a9a"><path d="M1 3.5H5M3 1V11.5M3 5L1 9M3 5.5L5 8M6.5 1.5H11V11H6.5ZM6.5 6H11" stroke="currentColor" stroke-width="1.5" fill="none" stroke-linecap="square"/></svg><svg class="cj" viewBox="0 0 12 12" style="color:#9a9a9a"><path d="M1 1.5H5L3 5L5 8.5H1.5M6.5 1.5H11V5.5H6.5ZM6.5 8H11V11.5H6.5Z" stroke="currentColor" stroke-width="1.5" fill="none" stroke-linecap="square"/></svg></div><div class="ln" style="top:600px">38</div><div class="cl" style="top:600px"><span>                </span><span class="hint" style="width:94px;margin-left:2px;margin-right:4px">attributeName:</span><span class="kw">null,</span></div><div class="ln" style="top:620px">39</div><div class="cl" style="top:620px"><span>                </span><span class="cm">// </span><svg class="cj" viewBox="0 0 12 12" style="color:#9a9a9a"><path d="M2 11.5V1.5H10.5V11.5M2 5H10.5M2 8.5H10.5M6.2 1.5V11.5" stroke="currentColor" stroke-width="1.5" fill="none" stroke-linecap="square"/></svg><svg class="cj" viewBox="0 0 12 12" style="color:#9a9a9a"><path d="M3 1L1.5 3.5M8 1L6.5 3.5M2 3H5M7 3H11M2 6.5L6 5L10 6.5M3 8H9V11.5H3Z" stroke="currentColor" stroke-width="1.5" fill="none" stroke-linecap="square"/></svg><svg class="cj" viewBox="0 0 12 12" style="color:#9a9a9a"><path d="M2 11.5V1.5H10.5V11.5M2 5H10.5M2 8.5H10.5M6.2 1.5V11.5" stroke="currentColor" stroke-width="1.5" fill="none" stroke-linecap="square"/></svg><svg class="cj" viewBox="0 0 12 12" style="color:#9a9a9a"><path d="M3 1L1 5.5M2.5 4V11.5M5 3.5H11M8 1V6M8 6L5 11.5M8 6L11 11.5" stroke="currentColor" stroke-width="1.5" fill="none" stroke-linecap="square"/></svg><svg class="cj" viewBox="0 0 12 12" style="color:#9a9a9a"><path d="M3 1L1.5 3.5M8 1L6.5 3.5M2 3H5M7 3H11M2 6.5L6 5L10 6.5M3 8H9V11.5H3Z" stroke="currentColor" stroke-width="1.5" fill="none" stroke-linecap="square"/></svg><svg class="cj" viewBox="0 0 12 12" style="color:#9a9a9a"><path d="M6 1V3M1.5 3H10.5M3 5H9M2 7.5H10M4 7.5L2 11.5M8 7.5L10.5 11.5M6 7.5V11.5" stroke="currentColor" stroke-width="1.5" fill="none" stroke-linecap="square"/></svg><svg class="cj" viewBox="0 0 12 12" style="color:#9a9a9a"><path d="M6 1V3M1.5 3H10.5M3 5H9M2 7.5H10M4 7.5L2 11.5M8 7.5L10.5 11.5M6 7.5V11.5" stroke="currentColor" stroke-width="1.5" fill="none" stroke-linecap="square"/></svg><svg class="cj" viewBox="0 0 12 12" style="color:#9a9a9a"><path d="M3 1L1.5 3.5M8 1L6.5 3.5M2 3H5M7 3H11M2 6.5L6 5L10 6.5M3 8H9V11.5H3Z" stroke="currentColor" stroke-width="1.5" fill="none" stroke-linecap="square"/></svg><svg class="cj" viewBox="0 0 12 12" style="color:#9a9a9a"><path d="M3 1L1 5.5M2.5 4V11.5M5 3.5H11M8 1V6M8 6L5 11.5M8 6L11 11.5" stroke="currentColor" stroke-width="1.5" fill="none" stroke-linecap="square"/></svg><svg class="cj" viewBox="0 0 12 12" style="color:#9a9a9a"><path d="M2 11.5V1.5H10.5V11.5M2 5H10.5M2 8.5H10.5M6.2 1.5V11.5" stroke="currentColor" stroke-width="1.5" fill="none" stroke-linecap="square"/></svg><svg class="cj" viewBox="0 0 12 12" style="color:#9a9a9a"><path d="M3 1L1.5 3.5M8 1L6.5 3.5M2 3H5M7 3H11M2 6.5L6 5L10 6.5M3 8H9V11.5H3Z" stroke="currentColor" stroke-width="1.5" fill="none" stroke-linecap="square"/></svg><svg class="cj" viewBox="0 0 12 12" style="color:#9a9a9a"><path d="M2 11.5V1.5H10.5V11.5M2 5H10.5M2 8.5H10.5M6.2 1.5V11.5" stroke="currentColor" stroke-width="1.5" fill="none" stroke-linecap="square"/></svg></div><div class="ln" style="top:640px">40</div><div class="cl" style="top:640px"><span>                </span><span class="hint" style="width:131px;margin-left:2px;margin-right:2px">prefixAttributeName:</span><span class="kw">false,</span></div><div class="ln" style="top:660px">41</div><div class="cl" style="top:660px"><span>                </span><span class="cm">// </span><svg class="cj" viewBox="0 0 12 12" style="color:#9a9a9a"><path d="M2 2H10M1 5.5H11M6 2V11.5L4.5 10.5M2 8.5H10" stroke="currentColor" stroke-width="1.5" fill="none" stroke-linecap="square"/></svg><svg class="cj" viewBox="0 0 12 12" style="color:#9a9a9a"><path d="M2 11.5V1.5H10.5V11.5M2 5H10.5M2 8.5H10.5M6.2 1.5V11.5" stroke="currentColor" stroke-width="1.5" fill="none" stroke-linecap="square"/></svg><span style="display:inline-block;width:9px;font-family:'Liberation Sans',sans-serif;font-size:13px;letter-spacing:0;color:#9a9a9a">(</span><svg class="cj" viewBox="0 0 12 12" style="color:#9a9a9a"><path d="M2 2H10M1 5.5H11M6 2V11.5L4.5 10.5M2 8.5H10" stroke="currentColor" stroke-width="1.5" fill="none" stroke-linecap="square"/></svg><svg class="cj" viewBox="0 0 12 12" style="color:#9a9a9a"><path d="M2 11.5V1.5H10.5V11.5M2 5H10.5M2 8.5H10.5M6.2 1.5V11.5" stroke="currentColor" stroke-width="1.5" fill="none" stroke-linecap="square"/></svg><svg class="cj" viewBox="0 0 12 12" style="color:#9a9a9a"><path d="M2 2H10M1 5.5H11M6 2V11.5L4.5 10.5M2 8.5H10" stroke="currentColor" stroke-width="1.5" fill="none" stroke-linecap="square"/></svg><svg class="cj" viewBox="0 0 12 12" style="color:#9a9a9a"><path d="M1.5 2V11M1.5 6H4.5M5.5 1V11M9.5 3L7 6M7 1.5V10.5L11 11" stroke="currentColor" stroke-width="1.5" fill="none" stroke-linecap="square"/></svg><svg class="cj" viewBox="0 0 12 12" style="color:#9a9a9a"><path d="M2 11.5V1.5H10.5V11.5M2 5H10.5M2 8.5H10.5M6.2 1.5V11.5" stroke="currentColor" stroke-width="1.5" fill="none" stroke-linecap="square"/></svg><svg class="cj" viewBox="0 0 12 12" style="color:#9a9a9a"><path d="M1 3.5H5M3 1V11.5M3 5L1 9M3 5.5L5 8M6.5 1.5H11V11H6.5ZM6.5 6H11" stroke="currentColor" stroke-width="1.5" fill="none" stroke-linecap="square"/></svg><svg class="cj" viewBox="0 0 12 12" style="color:#9a9a9a"><path d="M1 3.5H5M3 1V11.5M3 5L1 9M3 5.5L5 8M6.5 1.5H11V11H6.5ZM6.5 6H11" stroke="currentColor" stroke-width="1.5" fill="none" stroke-linecap="square"/></svg><svg class="cj" viewBox="0 0 12 12" style="color:#9a9a9a"><path d="M2 11.5V1.5H10.5V11.5M2 5H10.5M2 8.5H10.5M6.2 1.5V11.5" stroke="currentColor" stroke-width="1.5" fill="none" stroke-linecap="square"/></svg><svg class="cj" viewBox="0 0 12 12" style="color:#9a9a9a"><path d="M1.5 2V11M1.5 6H4.5M5.5 1V11M9.5 3L7 6M7 1.5V10.5L11 11" stroke="currentColor" stroke-width="1.5" fill="none" stroke-linecap="square"/></svg><span style="display:inline-block;width:8px;font-family:'Liberation Sans',sans-serif;font-size:13px;letter-spacing:0;color:#9a9a9a">)</span></div><div class="ln" style="top:680px">42</div><div class="cl" style="top:680px"><span>                </span><span class="cst">PRECEDENCE</span><span>)</span><span class="kw">;</span></div><div class="ln" style="top:700px">43</div><div class="cl" style="top:700px"><span>    }</span></div><div class="ln" style="top:720px">44</div><div class="cl" style="top:720px"></div><div class="ln" style="top:740px">45</div><div class="cl" style="top:740px"><span>    </span><span class="ann">@Override</span></div><div class="ln" style="top:760px">46</div><div class="cl" style="top:760px"><span>    </span><span class="kw">protected void</span><span> </span><span class="fn">doProcess</span><span>(ITemplateContext iTemplateContext</span><span class="kw">,</span><span> IProcessableElementTag iProcessableElementTag</span><span class="kw">,</span><span> IElementTagStructureHandler iElementTagStructureHandler) {</span></div><div class="ln" style="top:780px">47</div><div class="cl" style="top:780px"><span>        </span><span class="cm">//</span><svg class="cj" viewBox="0 0 12 12" style="color:#9a9a9a"><path d="M1.5 2V11M1.5 6H4.5M5.5 1V11M9.5 3L7 6M7 1.5V10.5L11 11" stroke="currentColor" stroke-width="1.5" fill="none" stroke-linecap="square"/></svg><svg class="cj" viewBox="0 0 12 12" style="color:#9a9a9a"><path d="M3 1L1 5.5M2.5 4V11.5M5 3.5H11M8 1V6M8 6L5 11.5M8 6L11 11.5" stroke="currentColor" stroke-width="1.5" fill="none" stroke-linecap="square"/></svg><svg class="cj" viewBox="0 0 12 12" style="color:#9a9a9a"><path d="M1.5 2V11M1.5 6H4.5M5.5 1V11M9.5 3L7 6M7 1.5V10.5L11 11" stroke="currentColor" stroke-width="1.5" fill="none" stroke-linecap="square"/></svg><svg class="cj" viewBox="0 0 12 12" style="color:#9a9a9a"><path d="M1 3.5H5M3 1V11.5M3 5L1 9M3 5.5L5 8M6.5 1.5H11V11H6.5ZM6.5 6H11" stroke="currentColor" stroke-width="1.5" fill="none" stroke-linecap="square"/></svg><svg class="cj" viewBox="0 0 12 12" style="color:#9a9a9a"><path d="M3 1L1 5.5M2.5 4V11.5M5 3.5H11M8 1V6M8 6L5 11.5M8 6L11 11.5" stroke="currentColor" stroke-width="1.5" fill="none" stroke-linecap="square"/></svg><svg class="cj" viewBox="0 0 12 12" style="color:#9a9a9a"><path d="M2 2H10M1 5.5H11M6 2V11.5L4.5 10.5M2 8.5H10" stroke="currentColor" stroke-width="1.5" fill="none" stroke-linecap="square"/></svg><svg class="cj" viewBox="0 0 12 12" style="color:#9a9a9a"><path d="M2 2H10M1 5.5H11M6 2V11.5L4.5 10.5M2 8.5H10" stroke="currentColor" stroke-width="1.5" fill="none" stroke-linecap="square"/></svg><svg class="cj" viewBox="0 0 12 12" style="color:#9a9a9a"><path d="M3 1L1 5.5M2.5 4V11.5M5 3.5H11M8 1V6M8 6L5 11.5M8 6L11 11.5" stroke="currentColor" stroke-width="1.5" fill="none" stroke-linecap="square"/></svg></div><div class="ln" style="top:800px">48</div><div class="cl" style="top:800px"><span>        String tagName = iProcessableElementTag.getAttributeValue(</span><span class="hint" style="width:18px;margin-left:2px;margin-right:4px">s:</span><span class="str">&quot;name&quot;</span><span>)</span><span class="kw">;</span></div><div class="ln" style="top:820px">49</div><div class="cl" style="top:820px"><span>        String tagValue = iProcessableElementTag.getAttributeValue(</span><span class="hint" style="width:18px;margin-left:2px;margin-right:4px">s:</span><span class="str">&quot;value&quot;</span><span>)</span><span class="kw">;</span></div><div class="ln" style="top:840px">50</div><div class="cl" style="top:840px"><span>        String tagSize = iProcessableElementTag.getAttributeValue(</span><span class="hint" style="width:18px;margin-left:2px;margin-right:4px">s:</span><span class="str">&quot;size&quot;</span><span>)</span><span class="kw">;</span></div><div class="ln" style="top:860px">51</div><div class="cl" style="top:860px"><span>        String[] itemSize = tagSize.split(</span><span class="hint" style="width:43px;margin-left:2px;margin-right:3px">regex:</span><span class="str">"</span><span class="str" style="background:#3b514d">x</span><span class="str">"</span><span>)</span><span class="kw">;</span></div><div class="ln" style="top:880px">52</div><div class="cl" style="top:880px"><span>        String itemWidth = itemSize[</span><span class="num">0</span><span>]</span><span class="kw">;</span></div><svg class="abs" style="left:69px;top:45px" width="10" height="12" viewBox="0 0 10 12"><path d="M0.5 1.5H9.5V10.5H0.5Z" fill="#313335" stroke="#606366"/><path d="M3 6H7" stroke="#606366"/></svg><svg class="abs" style="left:69px;top:105px" width="10" height="12" viewBox="0 0 10 12"><path d="M0.5 0.5H9.5V7.5L5 11.5L0.5 7.5Z" fill="#313335" stroke="#606366"/><path d="M3 5H7" stroke="#606366"/></svg><svg class="abs" style="left:69px;top:145px" width="10" height="12" viewBox="0 0 10 12"><path d="M0.5 11.5H9.5V4.5L5 0.5L0.5 4.5Z" fill="#313335" stroke="#606366"/><path d="M3 7H7" stroke="#606366"/></svg><svg class="abs" style="left:69px;top:185px" width="10" height="12" viewBox="0 0 10 12"><path d="M0.5 0.5H9.5V7.5L5 11.5L0.5 7.5Z" fill="#313335" stroke="#606366"/><path d="M3 5H7" stroke="#606366"/></svg><svg class="abs" style="left:69px;top:225px" width="10" height="12" viewBox="0 0 10 12"><path d="M0.5 11.5H9.5V4.5L5 0.5L0.5 4.5Z" fill="#313335" stroke="#606366"/><path d="M3 7H7" stroke="#606366"/></svg><svg class="abs" style="left:69px;top:285px" width="10" height="12" viewBox="0 0 10 12"><path d="M0.5 0.5H9.5V7.5L5 11.5L0.5 7.5Z" fill="#313335" stroke="#606366"/><path d="M3 5H7" stroke="#606366"/></svg><svg class="abs" style="left:69px;top:365px" width="10" height="12" viewBox="0 0 10 12"><path d="M0.5 11.5H9.5V4.5L5 0.5L0.5 4.5Z" fill="#313335" stroke="#606366"/><path d="M3 7H7" stroke="#606366"/></svg><svg class="abs" style="left:69px;top:385px" width="10" height="12" viewBox="0 0 10 12"><path d="M0.5 0.5H9.5V7.5L5 11.5L0.5 7.5Z" fill="#313335" stroke="#606366"/><path d="M3 5H7" stroke="#606366"/></svg><svg class="abs" style="left:69px;top:705px" width="10" height="12" viewBox="0 0 10 12"><path d="M0.5 11.5H9.5V4.5L5 0.5L0.5 4.5Z" fill="#313335" stroke="#606366"/><path d="M3 7H7" stroke="#606366"/></svg><svg class="abs" style="left:69px;top:765px" width="10" height="12" viewBox="0 0 10 12"><path d="M0.5 0.5H9.5V7.5L5 11.5L0.5 7.5Z" fill="#313335" stroke="#606366"/><path d="M3 5H7" stroke="#606366"/></svg><svg class="abs" style="left:34px;top:762px" width="30" height="16" viewBox="0 0 30 16"><circle cx="5" cy="8" r="4.5" fill="#59a869"/><circle cx="5" cy="8" r="1.5" fill="#2b2b2b"/><path d="M11 3V14M8.5 6L11 2.5L13.5 6" stroke="#c75450" stroke-width="1.5" fill="none"/><circle cx="23" cy="8" r="5.5" fill="#9a9a9a"/><circle cx="23" cy="8" r="2.5" fill="none" stroke="#3c3f41"/></svg><div class="abs" style="left:81px;top:878px;width:1137px;height:8px;background:rgba(120,120,120,0.78)"></div><div class="abs" style="left:1531px;top:5px;width:8px;height:229px;background:#4f4f4f"></div><div class="abs" style="left:1528px;top:1px;width:10px;height:11px;background:#d9a51c"></div><div class="abs" style="left:1529px;top:248px;width:11px;height:3px;background:#c99d3a"></div></div><div id="crumb" class="abs"><div class="t" style="left:83px;top:4px;color:#bbbbbb;font-size:13px;">WidgetUploadSingleImageTagProcessor</div><svg class="abs" style="left:331px;top:9px" width="6" height="12" viewBox="0 0 6 12"><path d="M1 1L5 6L1 11" fill="none" stroke="#6e6e6e"/></svg><div class="t" style="left:346px;top:4px;color:#bbbbbb;font-size:13px;">doProcess()</div></div><div id="rstrip" class="abs"><div class="t" style="left:2px;top:7px;color:#bbbbbb;font-size:15px;font-style:italic;font-weight:bold;line-height:16px">m</div><div class="abs" style="left:17px;top:29px;transform:rotate(90deg);transform-origin:0 0;white-space:pre;font-size:12px;line-height:14px;color:#bbbbbb">Maven</div><svg class="abs" style="left:3px;top:83px" width="14" height="14" viewBox="0 0 14 14"><ellipse cx="7" cy="7.5" rx="3.5" ry="5" fill="#bbbbbb"/><path d="M1 5h3M10 5h3M1 9h3M10 9h3" stroke="#bbbbbb" stroke-width="1.3"/></svg><div class="abs" style="left:17px;top:101px;transform:rotate(90deg);transform-origin:0 0;white-space:pre;font-size:12px;line-height:14px;color:#bbbbbb">Ant</div><svg class="abs" style="left:4px;top:142px" width="12" height="14" viewBox="0 0 12 14"><rect x="1" y="1" width="10" height="12" rx="3" fill="#bbbbbb"/><path d="M1 5h10M1 9h10" stroke="#3c3f41"/></svg><div class="abs" style="left:17px;top:168px;transform:rotate(90deg);transform-origin:0 0;white-space:pre;font-size:12px;line-height:14px;color:#bbbbbb">Database</div><svg class="abs" style="left:4px;top:232px" width="12" height="10" viewBox="0 0 12 10"><rect x="0" y="2" width="12" height="6" fill="#3592c4"/><rect x="3" y="3.5" width="6" height="3" fill="#7fb8e0"/></svg><div class="abs" style="left:17px;top:247px;transform:rotate(90deg);transform-origin:0 0;white-space:pre;font-size:12px;line-height:14px;color:#bbbbbb">Jms Messenger</div><svg class="abs" style="left:3px;top:350px" width="14" height="14" viewBox="0 0 14 14"><circle cx="7" cy="7" r="6" fill="#bbbbbb"/><path d="M3 7l3 3 5-6" stroke="#3c3f41" stroke-width="1.6" fill="none"/></svg><div class="abs" style="left:17px;top:366px;transform:rotate(90deg);transform-origin:0 0;white-space:pre;font-size:12px;line-height:14px;color:#bbbbbb">Bean Validation</div><svg class="abs" style="left:5px;top:858px" width="12" height="12" viewBox="0 0 12 12"><rect x="0" y="0" width="5" height="4" fill="#bbbbbb"/><rect x="6" y="3" width="5" height="4" fill="#bbbbbb"/><rect x="0" y="7" width="5" height="4" fill="#bbbbbb"/></svg><div class="abs" style="left:17px;top:871px;transform:rotate(90deg);transform-origin:0 0;white-space:pre;font-size:11.5px;line-height:14px;color:#bbbbbb">2: Structure</div></div><div id="toolbar" class="abs"><svg class="abs" style="left:30px;top:2px" width="16" height="16" viewBox="0 0 16 16"><path d="M3 2l9 6-9 6z" fill="#bbbbbb"/><circle cx="11" cy="13" r="2.5" fill="#59a869"/></svg><div class="t" style="left:47px;top:0.5px;font-size:12px;color:#bbbbbb"><u style="text-underline-offset:1px">4</u>: Run</div><svg class="abs" style="left:100px;top:2px" width="16" height="16" viewBox="0 0 16 16"><ellipse cx="8" cy="9" rx="4" ry="5" fill="#bbbbbb"/><path d="M1 6h3M12 6h3M1 10h3M12 10h3" stroke="#bbbbbb" stroke-width="1.4"/></svg><div class="t" style="left:118px;top:0.5px;font-size:12px;color:#bbbbbb"><u style="text-underline-offset:1px">5</u>: Debug</div><svg class="abs" style="left:185px;top:2px" width="16" height="16" viewBox="0 0 16 16"><path d="M2 3h2v2H2zM6 3h8v2H6zM2 7h2v2H2zM6 7h8v2H6zM2 11h2v2H2zM6 11h8v2H6z" fill="#bbbbbb"/></svg><div class="t" style="left:202px;top:0.5px;font-size:12px;color:#bbbbbb"><u style="text-underline-offset:1px">6</u>: TODO</div><svg class="abs" style="left:264px;top:2px" width="16" height="16" viewBox="0 0 16 16"><path d="M2 5L7 2L10 5L8 7L15 14L13 15L6 9L4 11z" fill="#bbbbbb"/></svg><div class="t" style="left:284px;top:0.5px;font-size:12px;color:#bbbbbb">Build</div><svg class="abs" style="left:330px;top:2px" width="16" height="16" viewBox="0 0 16 16"><path d="M2 13C2 7 7 3 14 3C14 10 10 14 4 14z" fill="#bbbbbb"/><path d="M3 13C6 9 9 7 12 5" stroke="#3c3f41" stroke-width="1.2"/></svg><div class="t" style="left:348px;top:0.5px;font-size:12px;color:#bbbbbb">Spring</div><svg class="abs" style="left:403px;top:2px" width="16" height="16" viewBox="0 0 16 16"><rect x="1.5" y="2.5" width="13" height="11" fill="#bbbbbb"/><path d="M4 6l2 2-2 2M8 10h4" stroke="#3c3f41" stroke-width="1.2" fill="none"/></svg><div class="t" style="left:419px;top:0.5px;font-size:12px;color:#bbbbbb">Terminal</div><svg class="abs" style="left:485px;top:2px" width="16" height="16" viewBox="0 0 16 16"><rect x="1" y="2" width="9" height="9" fill="none" stroke="#bbbbbb" stroke-width="1.5"/><rect x="6" y="7" width="9" height="8" fill="#bbbbbb"/></svg><div class="t" style="left:503px;top:0.5px;font-size:12px;color:#bbbbbb">Java Enterprise</div><svg class="abs" style="left:604px;top:2px" width="16" height="16" viewBox="0 0 16 16"><path d="M4 2v12M4 9c0-4 7-2 7-6M11 2v3" stroke="#bbbbbb" stroke-width="1.6" fill="none"/></svg><div class="t" style="left:622px;top:0.5px;font-size:12px;color:#bbbbbb"><u style="text-underline-offset:1px">2</u>: Version Control</div><svg class="abs" style="left:739px;top:2px" width="16" height="16" viewBox="0 0 16 16"><circle cx="8" cy="8" r="6.5" fill="#bbbbbb"/><path d="M4 5c2 1 3 0 4 2s-2 3 0 5M10 3c0 2 2 2 3 3" stroke="#3c3f41" stroke-width="1.3" fill="none"/></svg><div class="t" style="left:755px;top:0.5px;font-size:12px;color:#bbbbbb">Endpoints</div><svg class="abs" style="left:833px;top:2px" width="16" height="16" viewBox="0 0 16 16"><path d="M1 7h14v7H1z" fill="#222"/><path d="M4 3h8l3 4H1z" fill="#c75450"/></svg><div class="t" style="left:852px;top:0.5px;font-size:12px;color:#bbbbbb">MyBatis Log</div><svg class="abs" style="left:1815px;top:2px" width="16" height="16" viewBox="0 0 16 16"><circle cx="8" cy="8.5" r="6.5" fill="#c75450"/><text x="5.2" y="12.3" font-size="9.5" font-family="Liberation Sans" font-weight="bold" fill="#fff">3</text></svg><div class="t" style="left:1834px;top:0.5px;font-size:12.8px;color:#bbbbbb">Event Log</div></div><div id="status" class="abs"><svg class="abs" style="left:4px;top:4px" width="14" height="14" viewBox="0 0 14 14"><rect x="1" y="1" width="12" height="12" fill="#7a7a7a"/><rect x="3.5" y="1" width="9.5" height="9.5" fill="#3c3f41"/><rect x="3.5" y="1" width="9.5" height="9.5" fill="none" stroke="#9a9a9a" stroke-width="1.2"/></svg><div class="t" style="left:27px;top:1px;color:#bbbbbb;font-size:13.3px;">All files are up-to-date (12 minutes ago)</div><div class="t" style="left:1529px;top:1px;color:#bbbbbb;font-size:13px;">40 chars</div><div class="t" style="left:1599px;top:1px;color:#bbbbbb;font-size:13px;">67:140</div><div class="t" style="left:1649px;top:1px;color:#bbbbbb;font-size:13px;">CRLF</div><div class="t" style="left:1688px;top:1px;color:#bbbbbb;font-size:13px;">U</div></div><div class="abs" style="left:0;top:1038px;width:1920px;height:2px;background:#1f2b38"></div><div class="abs" style="left:1716px;top:1017px;width:204px;height:23px;background:#ffffff"></div><svg class="abs" style="left:1690px;top:1012px" width="30" height="28" viewBox="0 0 30 28"><path d="M2 6Q2 3 5 2.5L23 0Q27 0 27.5 3L28.5 21Q28.5 25 25 25.5L7 27.5Q3.5 28 3 24z" fill="#f15a2b"/><path d="M20 7.5Q14 4 9.5 7.5T13 14T16.5 20T8 19" stroke="#fff" stroke-width="4" fill="none" stroke-linecap="round"/></svg><svg class="abs" style="left:1724px;top:1020px" width="18" height="18" viewBox="0 0 18 18"><path d="M9 0.5v17M2.5 5h13v7h-13z" stroke="#1d6fd1" stroke-width="2.4" fill="none"/></svg><svg class="abs" style="left:1748px;top:1020px" width="18" height="18" viewBox="0 0 18 18"><circle cx="4.5" cy="8" r="2" fill="#1d6fd1"/><path d="M12.5 8.5c1.5 0 1.5 4-2.5 6.5" stroke="#1d6fd1" stroke-width="2.6" fill="none"/><circle cx="12" cy="9" r="2" fill="#1d6fd1"/></svg><svg class="abs" style="left:1768px;top:1020px" width="18" height="18" viewBox="0 0 18 18"><circle cx="9" cy="9" r="7.5" fill="none" stroke="#1d6fd1" stroke-width="1.8"/><rect x="6" y="5" width="1.8" height="4" fill="#1d6fd1"/><rect x="10.2" y="5" width="1.8" height="4" fill="#1d6fd1"/><path d="M5.5 11.5c2 2 5 2 7 0" stroke="#1d6fd1" stroke-width="1.6" fill="none"/></svg><svg class="abs" style="left:1791px;top:1020px" width="18" height="18" viewBox="0 0 18 18"><rect x="6" y="0.5" width="6" height="11" rx="3" fill="#1d6fd1"/><path d="M3.5 8c0 6 11 6 11 0M9 14v4" stroke="#1d6fd1" stroke-width="1.8" fill="none"/></svg><svg class="abs" style="left:1812px;top:1020px" width="18" height="18" viewBox="0 0 18 18"><rect x="1" y="3" width="16" height="11" fill="none" stroke="#1d6fd1" stroke-width="2"/><path d="M4 7h2M8 7h2M12 7h2M4.5 10.5h9" stroke="#1d6fd1" stroke-width="1.6"/></svg><svg class="abs" style="left:1836px;top:1020px" width="18" height="18" viewBox="0 0 18 18"><circle cx="7" cy="4" r="2.8" fill="#b8c2cc"/><rect x="2" y="8" width="9" height="6" fill="#b8c2cc"/><rect x="8" y="10" width="9" height="7" fill="none" stroke="#b8c2cc" stroke-width="1.5"/></svg><svg class="abs" style="left:1857px;top:1020px" width="18" height="18" viewBox="0 0 18 18"><path d="M1 5l4.5-4h7l4.5 4-2.5 4h-2v9h-9V9h-2z" fill="#1d6fd1"/></svg><svg class="abs" style="left:1879px;top:1020px" width="18" height="18" viewBox="0 0 18 18"><path d="M2 2h5v3H2zM10 2h6v3h-6zM2.5 7h13v11h-2.5V9.5h-8.5V18H2.5z" fill="#1d6fd1"/><path d="M7 11h4v5H7z" fill="#1d6fd1"/></svg><svg class="abs" style="left:1900px;top:1020px" width="18" height="18" viewBox="0 0 18 18"><rect x="1" y="1" width="7" height="7" fill="#1d6fd1"/><rect x="10" y="1" width="7" height="7" fill="#4a90e2"/><rect x="1" y="10" width="7" height="7" fill="#4a90e2"/><rect x="10" y="10" width="7" height="7" fill="#1d6fd1"/></svg></div></body></html>
